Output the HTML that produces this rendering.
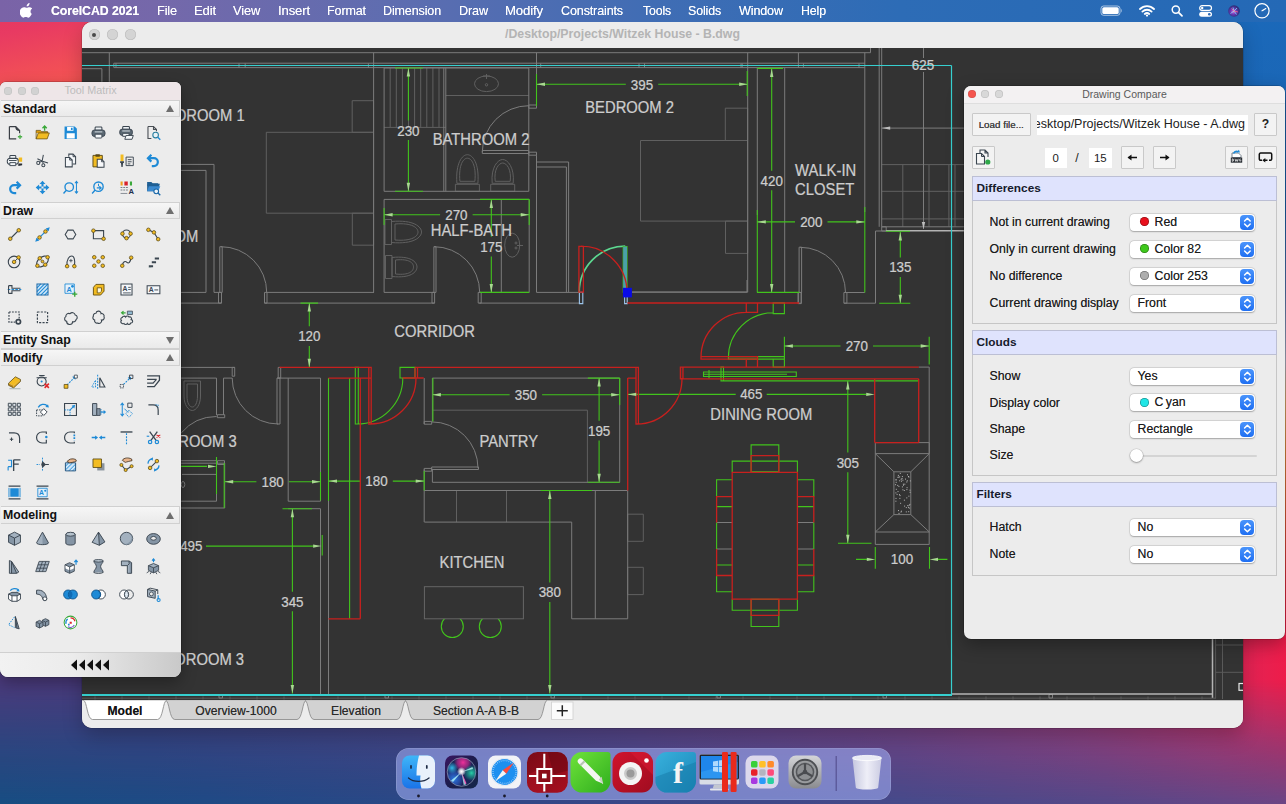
<!DOCTYPE html><html><head><meta charset="utf-8"><title>CorelCAD 2021</title><style>
*{box-sizing:border-box;margin:0;padding:0}
html,body{width:1286px;height:804px;overflow:hidden}
body{position:relative;font-family:'Liberation Sans',sans-serif;color:#222;
 background:linear-gradient(to bottom,#1b69ba 0,#1a64b2 26%,#5a7cb8 36%,#b9bcd0 45%,#e8b070 50%,#ea9040 56%,#ea6038 64%,#ee3040 72%,#f21846 80%,#ea1e4e 87%,#d82a5a 91%,#d82a5a 100%)}
#wptl{left:0;top:0;width:200px;height:100px;background:linear-gradient(168deg,#e4375f 0,#e83a62 24%,#f04c58 52%,#f85a4e 82%,#f95c4d 100%)}
#wpbA{left:0;top:640px;width:1286px;height:164px;background:linear-gradient(to right,#4b3a7b 0,#493a7b 12%,#553d7e 32%,#6a3f80 50%,#8a3a7a 70%,#b03570 84%,#d62a5c 94%,#ee1c4a 100%)}
#wpbB{left:0;top:640px;width:1286px;height:164px;background:linear-gradient(to right,#174d82 0,#1f4a85 16%,#2a4886 32%,#3a4888 50%,#454a8a 70%,#554888 86%,#6a4585 100%);
 -webkit-mask-image:linear-gradient(to bottom,transparent 0,transparent 24%,rgba(0,0,0,.55) 62%,#000 100%);mask-image:linear-gradient(to bottom,transparent 0,transparent 24%,rgba(0,0,0,.55) 62%,#000 100%)}
.abs{position:absolute}
#menubar{left:0;top:0;width:1286px;height:22px;background:linear-gradient(to right,#7a63a7 0,#7568aa 12%,#5f6db0 30%,#416db4 50%,#2d6cb6 70%,#2469b6 100%);color:#fff;font-size:13.6px;white-space:nowrap}
#menubar span{position:absolute;top:3px;transform-origin:0 50%;letter-spacing:-.15px;text-shadow:0 0 .6px rgba(255,255,255,.75)}
#main{left:82px;top:22px;width:1161px;height:706px;border-radius:10px;background:#ececec;box-shadow:0 0 0 .5px rgba(0,0,0,.25),0 8px 20px rgba(0,0,0,.22);overflow:hidden}
#mtitle{left:0;top:0;width:1161px;height:26px;background:#ececec;font-weight:bold;font-size:12.3px;color:#b4b4b4;line-height:25px}
#mtitle span{position:absolute;left:423px;top:0;white-space:nowrap;transform-origin:0 50%}
.tl{position:absolute;border-radius:50%}
#canvas{left:0;top:26px;width:1161px;height:652px;background:#333;overflow:hidden}
#tabs{left:0;top:678px;width:1161px;height:28px;background:#ececec}
#tabs span{position:absolute;top:3px;font-size:12.1px;color:#2a2a2a;text-align:center;line-height:17.5px;text-shadow:0 0 .4px rgba(0,0,0,.5)}
#tm{left:0;top:82px;width:181px;height:595px;border-radius:6px 6px 8px 8px;background:#ececec;box-shadow:0 0 0 .5px rgba(0,0,0,.3),0 6px 16px rgba(0,0,0,.3);overflow:hidden}
.tmh{position:absolute;left:1px;width:179px;height:17.200px;margin-top:-1.200px;background:linear-gradient(#f6f6f6,#eaeaea);border:1px solid #d0d0d0;border-left:0;font-weight:bold;font-size:12.3px;line-height:16px;padding-left:2px;color:#111}
.tmh i{position:absolute;right:5.500px;top:4.200px;width:0;height:0;border-left:4.200px solid transparent;border-right:4.200px solid transparent;border-bottom:7.200px solid #6e6e6e}
.tmh i.dn{border-bottom:0;border-top:7.200px solid #6e6e6e}
#dc{left:964px;top:86px;width:320.5px;height:553px;border-radius:7px;background:#ececec;box-shadow:0 0 0 .5px rgba(0,0,0,.3),0 6px 18px rgba(0,0,0,.3);overflow:hidden;font-size:12.3px;color:#1c1c1c}
.btn{position:absolute;background:#f3f3f3;border:1px solid #c9c9c9;border-radius:1px}
.fld{position:absolute;background:#fff;height:20px;line-height:20.5px;text-align:center;font-size:11.4px}
.sech{position:absolute;left:8px;width:305px;height:25px;margin-top:-1px;background:#dfe3fd;border:1px solid #bcbfd4;font-weight:bold;font-size:11.8px;line-height:23px;padding-left:3.5px;color:#161a2c}
.secb{position:absolute;left:8px;width:305px;border:1px solid #c6c6c6;border-top:0}
.lab{position:absolute;left:25.5px;height:16px;line-height:16px;white-space:nowrap;text-shadow:0 0 .4px rgba(0,0,0,.55)}
.sel{position:absolute;left:165.5px;width:125px;height:17px;background:#fff;border-radius:4px;box-shadow:0 0 0 .5px rgba(0,0,0,.12),0 .5px 1.5px rgba(0,0,0,.25);line-height:17px;padding-left:8px;font-size:12.3px;white-space:nowrap;text-shadow:0 0 .4px rgba(0,0,0,.5)}
.sel b{position:absolute;right:.5px;top:1px;width:14.5px;height:15px;border-radius:4px;background:linear-gradient(#4a94fb,#1f6ff2)}
.sel b svg{position:absolute;left:0;top:0}
.dot{display:inline-block;width:9px;height:9px;border-radius:50%;margin:0 6px 0 2px;vertical-align:-0.5px;box-shadow:inset 0 0 0 .8px rgba(0,0,0,.35)}
#dock{left:395.5px;top:748px;width:495px;height:52px;border-radius:13px;background:rgba(158,172,242,.6);box-shadow:inset 0 0 0 .6px rgba(255,255,255,.22)}
</style></head><body><div id="wptl" class="abs"></div><div id="wpbA" class="abs"></div><div id="wpbB" class="abs"></div><div id="main" class="abs"><div id="mtitle" class="abs"><span>/Desktop/Projects/Witzek House - B.dwg</span></div><div class="tl" style="left:6.9px;top:7px;width:11px;height:11px;background:#d4d4d4;box-shadow:inset 0 0 0 .6px #bdbdbd"></div><div class="tl" style="left:24.8px;top:7px;width:11px;height:11px;background:#d4d4d4;box-shadow:inset 0 0 0 .6px #bdbdbd"></div><div class="tl" style="left:42.8px;top:7px;width:11px;height:11px;background:#d4d4d4;box-shadow:inset 0 0 0 .6px #bdbdbd"></div><div class="tl" style="left:10.4px;top:10.5px;width:4px;height:4px;background:#4a4a4a"></div><div id="canvas" class="abs"><svg class="abs" style="left:0;top:0" width="1161" height="652" viewBox="82 48 1161 652"><path d="M82 698.2H1216M1215.6 600V698.2M95 696.5V699.5M122 696.5V699.5M149 696.5V699.5M176 696.5V699.5M203 696.5V699.5M230 696.5V699.5M257 696.5V699.5M284 696.5V699.5M311 696.5V699.5M338 696.5V699.5M365 696.5V699.5M392 696.5V699.5M419 696.5V699.5M446 696.5V699.5M473 696.5V699.5M500 696.5V699.5M527 696.5V699.5M554 696.5V699.5M581 696.5V699.5M608 696.5V699.5M635 696.5V699.5M662 696.5V699.5M689 696.5V699.5M716 696.5V699.5M743 696.5V699.5M770 696.5V699.5M797 696.5V699.5M824 696.5V699.5M851 696.5V699.5M878 696.5V699.5M905 696.5V699.5M932 696.5V699.5M959 696.5V699.5M986 696.5V699.5M1013 696.5V699.5M1040 696.5V699.5M1067 696.5V699.5M1094 696.5V699.5M1121 696.5V699.5M1148 696.5V699.5M1175 696.5V699.5M1202 696.5V699.5M1222.5 600V699M1216 645H1243M1216 672.3H1243" fill="none" stroke="#5a5a5a" stroke-width="1"/><path d="M881.7 164.6H964M881.7 191.3H964M881.7 218.9H964M902.8 164.6V226.8M929 164.6V226.8M948.9 164.6V226.8M955 164.6V226.8" fill="none" stroke="#626262" stroke-width="1"/><path d="M266.3 132.3H373.6V213.2H266.3ZM352.2 100.7H373.6V132.3H352.2ZM352.3 213.2H373.6V245.2H352.3ZM390.2 68V127.4M396.3 68V127.4M402.4 68V127.4M408.5 68V127.4M414.6 68V127.4M420.7 68V127.4M426.8 68V127.4M432.9 68V127.4M439 68V127.4M384.1 127.4H445.8M445.8 95.5H528.8M474.5 83.8a12 7.8 0 1 0 24 0a12 7.8 0 1 0 -24 0ZM485.3 84.8a1.2 1.2 0 1 0 2.4 0a1.2 1.2 0 1 0 -2.4 0ZM486.5 74V79M483 76H490M456.9 183.3C455.4 162.7 462.4 154.7 467.4 154.7C472.4 154.7 479.4 162.7 477.9 183.3ZM459.9 181.3C458.4 164.7 463.4 158.2 467.4 158.2C471.4 158.2 476.4 164.7 474.9 181.3ZM455.4 184.3H479.4V191.3H455.4ZM492.2 183.3C490.7 167.5 497.7 159.5 502.7 159.5C507.7 159.5 514.7 167.5 513.2 183.3ZM495.2 181.3C493.7 169.5 498.7 163 502.7 163C506.7 163 511.7 169.5 510.2 181.3ZM490.7 184.3H514.7V191.3H490.7ZM385 219.5H391.5V244.5H385ZM391.5 221.5C414 219.5 421.5 227 421.5 232C421.5 237 414 244.5 391.5 242.5ZM395 224C412.5 222.5 418 228 418 232C418 236 412.5 241.5 395 240ZM385.5 255.5H392V278.5H385.5ZM392 257.5C410.8 255.5 417 262 417 267C417 272 410.8 278.5 392 276.5ZM395.5 260C409.5 258.5 413.5 263 413.5 267C413.5 271 409.5 275.5 395.5 274ZM504.7 245.2a7.5 12 0 1 0 15 0a7.5 12 0 1 0 -15 0ZM515 243a1 1 0 1 0 2 0a1 1 0 1 0 -2 0ZM515 248a1 1 0 1 0 2 0a1 1 0 1 0 -2 0ZM517 245.5H523M640.5 140.5H747.7V221.1H640.5ZM725.3 108.2H747.7V140.5H725.3ZM725.5 221.1H747.7V253.4H725.5ZM184 381H200.5V396C200.5 405 196 410.5 192.3 410.5C188.5 410.5 184 405 184 396ZM187 384H197.5V396C197.5 403 195 407 192.3 407C189.5 407 187 403 187 396ZM432.4 410.2H587.4M587.4 410.2V482.3M456.5 490.5V522.1M506.5 490.5V522.1M627.7 514.2H643.3V541.3H627.7ZM627.7 567.3H643.3V594.6H627.7Z" fill="none" stroke="#606060" stroke-width="1"/><path d="M82 52.7H870.5M870.5 48V52.7M113.8 63.2H864.8M113.8 67.6H864.8M82 68.7H101.9M101.9 68.7V95M109.3 52.7V95M113.8 63.2V67.6M116 63.2V67.6M239 63.4V68M245.2 63.4V68M368.4 63.4V68M540.7 63.4V68M639 63.4V68M644.5 63.4V68M742.2 63.4V68M741 63.4V68M803.4 63.4V68M859 63.4V68M798.4 52.7V68M219 694.5H222.5V698H219ZM385 694.5H388.5V698H385ZM551 694.5H554.5V698H551ZM717 694.5H720.5V698H717ZM883 694.5H886.5V698H883ZM1049 694.5H1052.5V698H1049ZM373.6 52.7V292.4M82 164.4H214M214 164.4V292.4M82 170.4H206M206 170.4V292.4M219.8 246.7H222.2V292.4H219.8ZM221 246.7A45.7 45.7 0 0 1 266.7 292.4M82 292.4H206M214 292.4H219.8M266.5 292.4H374M82 303.1H221.5M218.5 292.4H221.5V303.1H218.5ZM264.5 292.4H267V303.1H264.5ZM264.5 303.1H434.6M384.1 68H528.8V191.3H384.1ZM443.8 68V191.3M445.8 68V191.3M528.8 105H536.5V108.2H528.8ZM528.8 152.2H536.5V155.2H528.8ZM528.8 105.7A46.5 46.5 0 0 0 482.3 152.2M482.3 150.5H528.8V153.5H482.3ZM536.5 52.7V105M536.5 155.2V292.4M536.5 162H568.6M536.5 167H566.4M566.4 167V292.4M568.6 162V292.4M384.1 199.4V292.4M384.1 199.4H529.2M529.2 199.4V292.4M384.1 292.4H433.9M479.4 292.4H529.2M433.9 246.7H436V292.4H433.9ZM434 246.7A45.7 45.7 0 0 1 479.7 292.4M432 292.4H434.6V303.1H432ZM478.2 292.4H481.2V303.1H478.2ZM479.4 303.1H580.1M501.3 199.4V292.4M536.6 292.4H580.1M747.7 52.7V292.2M632 292.2H747.7M757.3 68V215M784.7 68V292.4M864.8 52.7V212M879.2 48V226.8M881.7 48V226.8M799.1 247.2H801.6V292.5H799.1ZM800.3 247.3A45.2 45.2 0 0 1 845.5 292.5M798.6 292.5H801.2V303.2H798.6ZM843.9 292.5H846.9V303.2H843.9ZM845.6 292.5H864.8M843.9 303.2H875.5M875.5 231V303.2M875.5 231H886M881.7 226.8H964M881.7 226.8H886.2V231H881.7ZM881.7 128.1H964M923.5 48V58M923.5 72V229M82 367.4H234.7M232.2 367.4H234.7V376.2H232.2ZM82 378.1H216.5M223.5 378.1H232.2M216.5 378.1V415M223.5 378.1V415M217.3 414.7H224.7V417.7H217.3ZM277 378.1H280V424H277ZM278.2 424A46 46 0 0 1 232.2 378M278.2 367.4H280.7V378.1H278.2ZM277 378.1H320.5M288.2 378.1V501.2M320.5 378.1V501.2M288.2 501.2H320.5M288.2 508.7H320.5M320.5 508.7V694M328.5 500V694M216.5 416.5A46 46 0 0 0 181.3 432.9M82 460.7H216.5V501.2H82ZM82 463.2H224.7V508H82ZM217.5 460.7H224.5V464.5H217.5ZM182 474.4H216.5M181.2 484.5a1.8 3 0 1 0 3.6 0a1.8 3 0 1 0 -3.6 0ZM424.2 378.1V424M424.2 421.4H431.7V424.2H424.2ZM432.4 378.1V421.4M432.4 378.1H619.7M619.7 378.1V482.3M432.4 482.3H619.7M432.4 469.4V482.3M431.7 421.9A46.3 46.3 0 0 1 478 468.2M431.7 467H478.5V469.5H431.7ZM424.2 468.4H431.7V471.2H424.2ZM424.2 469.4V522.1M424.2 490.5H627.7M424.4 522.1H571.7M571.7 522.1V618.8M595.3 490.5V618.8M627.7 490.5V618.8M571.7 618.8H627.7M632 292H747M747 280V292M798 292.4H801.3V303.6H798ZM918.7 367.1H929.2M929.2 367.1V544.4M875.3 442.6H929.3V453.6H875.3ZM875.3 453.6V544.4M875.3 532H929.3M875.3 544.4H929.3M875.3 453.6L893.9 471.8M929.3 453.6L910.8 471.8M893.9 471.8H910.8V514.6H893.9ZM893.9 514.6L875.3 532M910.8 514.6L929.3 532M716.6 522.5H732.2M716.6 549H732.2M813.8 522.5H797.4M813.8 549H797.4" fill="none" stroke="#7c7c7c" stroke-width="1"/><path d="M951 694H1213M1212.5 600V697.8M886 230.8H964" fill="none" stroke="#b4b4b4" stroke-width="1.5"/><path d="M579.4 292.2H582.8V303.6H579.4ZM624.6 296H627.2V303.6H624.6Z" fill="none" stroke="#9cc4ea" stroke-width="1.1"/><path d="M625.2 246.2A46 46 0 0 0 579.2 292.2" fill="none" stroke="#5cd890" stroke-width="1.7"/><path d="M395 68H423M395 191.3H423M408.4 68V120.5M408.4 140.1V191.3M384.1 208V225M529.2 199.4V225M384.1 214.8H440.1M472.6 214.8H529.2M480 199.4H529.2M480 292.4H529.2M491.3 199.4V236.8M491.3 256.4V292.4M536.5 74V106M747.2 71V96M536.5 84.3H625.8M658.2 84.3H747.7M623.2 246.6H627V292.2H623.2ZM757.3 210V292.4M864.8 207V292.4M757.3 68.4H783M771.7 68.4V170.7M771.7 190.3V292.4M757.3 221.9H795M827.5 221.9H864.8M757.3 292.4H799M886 231.2H910M879.2 303.2H910.3M900.3 232V257.4M900.3 277V303.2M328.5 378.1V501M349.6 378.1V618.8M355.3 367.4H358.3V424H355.3ZM356.8 424A46 46 0 0 0 402.8 378M400 367.4H415V378H400ZM82 466.4H207M216.5 457V494M224.2 463V508M320.5 472V500.5M224.7 481.8H256.4M288.9 481.8H320.5M424.2 471V490.5M328.5 481.1H360.2M392.8 481.1H424.2M206 546.1H313M322.2 535V555.5M282.5 508.7H312M292.4 508.7V591.7M292.4 611.3V693.5M309.3 303.1V326.3M309.3 345.9V367.2M300.5 303.1H318M432.9 378.1V421.4M432.4 394.8H509.6M542.1 394.8H619.7M587.8 378.1H619.7M619.7 378.1V405M587.8 482.3H619.7M599.1 378.1V420.8M599.1 440.4V482.3M441.3 626.5a11 11 0 1 0 22 0a11 11 0 1 0 -22 0ZM479.3 626.5a11 11 0 1 0 22 0a11 11 0 1 0 -22 0ZM540.5 490.5H592M549.8 490.5V582.4M549.8 602V693.5M757 292.4H799.3M773.2 302.9H784.4V313.6H773.2ZM773.2 312.8A44.8 44.8 0 0 0 728.4 357.6M728.4 356.6H784.4V359.1H728.4ZM773.2 359.1H784.4V367.1H773.2ZM784.4 336.7V367M929.2 336.7V364.5M784.4 346H840.5M873 346H929.2M721 380.9H918.7M703.5 372H796.3V376.5H703.5ZM703.5 374.2H787M721 367.1H723.5V380.9H721ZM709 370V378.5M627.7 394.4H735.7M766.7 394.4H866M847.8 380.9V452.6M847.8 472.2V543.2M838 543.2H871.5M875.3 547V568.8M929.5 547V568.8M856 559.4H867M938 559.4H947.4M751.1 444.9H778.8V471.8H751.1ZM732.2 472.3L732.2 461.1L797.4 461.1L797.4 472.3M732.2 599.2L732.2 610.3L797.4 610.3L797.4 599.2M751.1 599.2H778.8V626.5H751.1ZM732.2 479.8L716.6 479.8L716.6 496.7M716.6 506.6H732.2M732.2 565L716.6 565M716.6 575.5L716.6 591.7L732.2 591.7M716.6 522.5V549M797.4 479.8L813.8 479.8L813.8 496.7M813.8 506.6H797.4M797.4 565L813.8 565M813.8 575.5L813.8 591.7L797.4 591.7M813.8 522.5V549" fill="none" stroke="#42c41c" stroke-width="1.1"/><rect x="424.4" y="586.7" width="99" height="32.1" fill="#333" stroke="#666"/><rect x="623.2" y="246.6" width="3.800" height="45.600" fill="#4aa0a8"/><path d="M578.9 246.3H583.4V292.2H578.9ZM581 246.2A46 46 0 0 1 627 292.2M627.4 303H799.1M279.5 367.4H370.2M360.3 378.1V618.8M328.5 618.8H360.3M328.5 378.1H371.5M368.8 367.4H371.2V424H368.8ZM370 424A46 46 0 0 0 416 378M415 367.4V378M417.5 367.4V378M415 367.4H638.4M402.6 378H423.7M627.7 378.1V490.5M627.7 378.1H636M636 367.4H638.4V424H636ZM636.5 424A45.5 45.5 0 0 0 682 378.5M680.6 367.2H683V378.6H680.6ZM660 302.9H798M746.3 302.9H757.5V312.3H746.3ZM746.3 312.3A45.3 45.3 0 0 0 701 357.6M701 356.6H757.5V359.1H701ZM746.3 359.1H757.5V367.1H746.3ZM680.4 367.1H918.7M680.4 367.1H682.9V378.8H680.4ZM682.9 378.8H918.7M918.7 378.8V442.6M874.7 378.8V442.6M874.7 442.6H918.7M751.1 472.3L751.1 455.6L778.8 455.6L778.8 472.3M751.1 599.2L751.1 615.4L778.8 615.4L778.8 599.2M732.2 472.3H797.4V599.2H732.2ZM732.2 496.7L716.6 496.7L716.6 522.5M716.6 549L716.6 575.5L732.2 575.5M797.4 496.7L813.8 496.7L813.8 522.5M813.8 549L813.8 575.5L797.4 575.5" fill="none" stroke="#c8201e" stroke-width="1.3"/><path d="M82 65.5H951.5M951.5 65.5V695" fill="none" stroke="#36cfcf" stroke-width="1.2"/><path d="M82 695H952" fill="none" stroke="#36cfcf" stroke-width="2"/><rect x="1239" y="683.5" width="5" height="6.800" fill="none" stroke="#e8e8e8" stroke-width="1.200"/><rect x="622.9" y="287.8" width="9" height="9.6" fill="#0a0ae6"/><path d="M898.3 477.2h1M900.7 479.3h1M895.8 489.3h1M908.6 505.4h1M906.3 482h1M902.9 484.2h1M897.4 477.3h1M898 510.6h1M907.2 505.7h1M906.8 480.8h1M899.4 498.4h1M905.8 507.6h1M908 476.5h1M903.9 500.2h1M902.4 480.2h1M901.9 476.6h1M908.8 508.1h1M903 485.2h1M908.4 496.2h1M908 507.3h1M902.4 489.8h1M903.8 490.5h1M897.2 485.4h1M907 474.8h1M895.5 498.4h1M899 494.7h1M901.9 486.9h1M909.8 480.9h1M901 481.2h1M904.3 484.2h1M900.1 503.3h1M899.6 495.6h1M908.4 477.1h1M895.7 482.3h1M906.3 497.9h1M898.4 486.4h1M897.5 491.6h1M895.4 501.2h1M908.2 511.7h1M905.8 511.9h1M895.1 484.7h1M909.3 504.4h1M901 511.2h1M904.1 506.1h1M899.2 480.8h1M901.5 478.5h1M900.5 512h1M899.8 473.4h1M895.5 479.9h1M906.6 487.7h1M899.2 476.9h1M909.5 490.2h1M897.9 475.4h1M895.6 479.8h1M905 479.1h1M895.4 492.9h1M898.5 513.4h1M896.6 494.4h1M906.4 489.6h1M909.6 492.3h1" stroke="#b5b5b5" stroke-width="1" fill="none"/><path d="M408.4 68L406.7 76.5L410.1 76.5Z" fill="#a8d890"/><path d="M408.4 191.3L406.7 182.8L410.1 182.8Z" fill="#a8d890"/><path d="M384.1 214.8L392.6 213.1L392.6 216.5Z" fill="#a8d890"/><path d="M529.2 214.8L520.7 213.1L520.7 216.5Z" fill="#a8d890"/><path d="M491.3 199.4L489.6 207.9L493 207.9Z" fill="#a8d890"/><path d="M491.3 292.4L489.6 283.9L493 283.9Z" fill="#a8d890"/><path d="M536.5 84.3L545 82.6L545 86Z" fill="#a8d890"/><path d="M747.7 84.3L739.2 82.6L739.2 86Z" fill="#a8d890"/><path d="M771.7 68.4L770 76.9L773.4 76.9Z" fill="#a8d890"/><path d="M771.7 292.4L770 283.9L773.4 283.9Z" fill="#a8d890"/><path d="M757.3 221.9L765.8 220.2L765.8 223.6Z" fill="#a8d890"/><path d="M864.8 221.9L856.3 220.2L856.3 223.6Z" fill="#a8d890"/><path d="M881.7 128.1L890.2 126.4L890.2 129.8Z" fill="#bdbdbd"/><path d="M923.5 229L921.8 222L925.2 222Z" fill="#bdbdbd"/><path d="M900.3 232L898.6 240.5L902 240.5Z" fill="#a8d890"/><path d="M900.3 303.2L898.6 294.7L902 294.7Z" fill="#a8d890"/><path d="M216.5 466.4L208 464.7L208 468.1Z" fill="#a8d890"/><path d="M224.7 481.8L233.2 480.1L233.2 483.5Z" fill="#a8d890"/><path d="M320.5 481.8L312 480.1L312 483.5Z" fill="#a8d890"/><path d="M328.5 481.1L337 479.4L337 482.8Z" fill="#a8d890"/><path d="M424.2 481.1L415.7 479.4L415.7 482.8Z" fill="#a8d890"/><path d="M321.6 546.1L313.1 544.4L313.1 547.8Z" fill="#a8d890"/><path d="M292.4 508.7L290.7 517.2L294.1 517.2Z" fill="#a8d890"/><path d="M292.4 693.5L290.7 685L294.1 685Z" fill="#a8d890"/><path d="M309.3 303.1L307.6 311.6L311 311.6Z" fill="#a8d890"/><path d="M309.3 367.2L307.6 358.7L311 358.7Z" fill="#a8d890"/><path d="M432.4 394.8L440.9 393.1L440.9 396.5Z" fill="#a8d890"/><path d="M619.7 394.8L611.2 393.1L611.2 396.5Z" fill="#a8d890"/><path d="M599.1 378.1L597.4 386.6L600.8 386.6Z" fill="#a8d890"/><path d="M599.1 482.3L597.4 473.8L600.8 473.8Z" fill="#a8d890"/><path d="M549.8 490.5L548.1 499L551.5 499Z" fill="#a8d890"/><path d="M549.8 693.5L548.1 685L551.5 685Z" fill="#a8d890"/><path d="M784.4 346L792.9 344.3L792.9 347.7Z" fill="#a8d890"/><path d="M929.2 346L920.7 344.3L920.7 347.7Z" fill="#a8d890"/><path d="M627.7 394.4L636.2 392.7L636.2 396.1Z" fill="#a8d890"/><path d="M874.7 394.4L866.2 392.7L866.2 396.1Z" fill="#a8d890"/><path d="M847.8 380.9L846.1 389.4L849.5 389.4Z" fill="#a8d890"/><path d="M847.8 543.2L846.1 534.7L849.5 534.7Z" fill="#a8d890"/><path d="M875.3 559.4L866.8 557.7L866.8 561.1Z" fill="#a8d890"/><path d="M929.5 559.4L938 557.7L938 561.1Z" fill="#a8d890"/><g font-family="'Liberation Sans',sans-serif" fill="#cdcdcd" stroke="#cdcdcd" stroke-width=".25"><text transform="translate(244.7 121.4) scale(.925 1)" font-size="16.0" text-anchor="end">BEDROOM 1</text><text transform="translate(198.3 241.6) scale(.925 1)" font-size="16.0" text-anchor="end">BATHROOM</text><text transform="translate(481 144.6) scale(.925 1)" font-size="16.0" text-anchor="middle">BATHROOM 2</text><text transform="translate(408.4 135.5) scale(.925 1)" font-size="14.49" text-anchor="middle">230</text><text transform="translate(456.4 220) scale(.925 1)" font-size="14.49" text-anchor="middle">270</text><text transform="translate(491.3 251.8) scale(.925 1)" font-size="14.49" text-anchor="middle">175</text><text transform="translate(471.3 236) scale(.925 1)" font-size="16.0" text-anchor="middle">HALF-BATH</text><text transform="translate(434.6 337.2) scale(.925 1)" font-size="16.0" text-anchor="middle">CORRIDOR</text><text transform="translate(629.6 112.8) scale(.925 1)" font-size="16.0" text-anchor="middle">BEDROOM 2</text><text transform="translate(642 89.5) scale(.925 1)" font-size="14.49" text-anchor="middle">395</text><text transform="translate(771.7 185.7) scale(.925 1)" font-size="14.49" text-anchor="middle">420</text><text transform="translate(795.1 176.3) scale(.925 1)" font-size="16.0" text-anchor="start">WALK-IN</text><text transform="translate(795.1 195.4) scale(.925 1)" font-size="16.0" text-anchor="start">CLOSET</text><text transform="translate(811.3 227.1) scale(.925 1)" font-size="14.49" text-anchor="middle">200</text><text transform="translate(923 70) scale(.925 1)" font-size="14.49" text-anchor="middle">625</text><text transform="translate(900.3 272.4) scale(.925 1)" font-size="14.49" text-anchor="middle">135</text><text transform="translate(236.7 447) scale(.925 1)" font-size="16.0" text-anchor="end">BATHROOM 3</text><text transform="translate(272.6 487) scale(.925 1)" font-size="14.49" text-anchor="middle">180</text><text transform="translate(376.5 486.3) scale(.925 1)" font-size="14.49" text-anchor="middle">180</text><text transform="translate(191.3 551.2) scale(.925 1)" font-size="14.49" text-anchor="middle">495</text><text transform="translate(292.4 606.7) scale(.925 1)" font-size="14.49" text-anchor="middle">345</text><text transform="translate(244.1 664.6) scale(.925 1)" font-size="16.0" text-anchor="end">BEDROOM 3</text><text transform="translate(309.3 341.3) scale(.925 1)" font-size="14.49" text-anchor="middle">120</text><text transform="translate(525.9 400) scale(.925 1)" font-size="14.49" text-anchor="middle">350</text><text transform="translate(599.1 435.8) scale(.925 1)" font-size="14.49" text-anchor="middle">195</text><text transform="translate(508.7 447) scale(.925 1)" font-size="16.0" text-anchor="middle">PANTRY</text><text transform="translate(472 568.4) scale(.925 1)" font-size="16.0" text-anchor="middle">KITCHEN</text><text transform="translate(549.8 597.4) scale(.925 1)" font-size="14.49" text-anchor="middle">380</text><text transform="translate(856.8 351.2) scale(.925 1)" font-size="14.49" text-anchor="middle">270</text><text transform="translate(751.3 399.2) scale(.925 1)" font-size="14.49" text-anchor="middle">465</text><text transform="translate(761.3 420) scale(.925 1)" font-size="16.0" text-anchor="middle">DINING ROOM</text><text transform="translate(847.8 467.6) scale(.925 1)" font-size="14.49" text-anchor="middle">305</text><text transform="translate(902 564.4) scale(.925 1)" font-size="14.49" text-anchor="middle">100</text></g></svg></div><div id="tabs" class="abs"><svg class="abs" style="left:0;top:0" width="1161" height="28" viewBox="82 700 1161 28"><rect x="82" y="700" width="1161" height="1" fill="#bdbdbd"/><path d="M405 700.5C408.5 700.5 408.5 719.500 414 719.500H538C543.5 719.500 543.5 700.5 547 700.5" fill="#d2d2d2" stroke="#8e8e8e" stroke-width=".9"/><path d="M305 700.5C308.5 700.5 308.5 719.500 314 719.500H397C402.5 719.500 402.5 700.5 406 700.5" fill="#d2d2d2" stroke="#8e8e8e" stroke-width=".9"/><path d="M165.8 700.5C169.3 700.5 169.3 719.500 174.8 719.500H297C302.5 719.500 302.5 700.5 306 700.5" fill="#d2d2d2" stroke="#8e8e8e" stroke-width=".9"/><path d="M83.5 700.5C87.0 700.5 87.0 719.500 92.5 719.500H157.5C163.0 719.500 163.0 700.5 166.5 700.5" fill="#ffffff" stroke="#8e8e8e" stroke-width=".9"/><rect x="551.5" y="702" width="21.5" height="17.500" fill="#fbfbfb" stroke="#cfcfcf" stroke-width=".8"/><path d="M562.3 705.3v11M556.800 710.800h11" stroke="#222" stroke-width="1.5" fill="none"/></svg><span style="left:13px;width:60px;font-weight:bold;color:#111">Model</span><span style="left:104px;width:100px">Overview-1000</span><span style="left:234px;width:80px">Elevation</span><span style="left:334px;width:120px">Section A-A B-B</span></div></div><div id="tm" class="abs"><div class="abs" style="left:0;top:0;width:181px;height:18px;background:#eee6e8;text-align:center;font-size:10.800px;color:#bcbcbc;line-height:17.5px;padding-left:0">Tool Matrix</div><div class="tl" style="left:4.4px;top:5.2px;width:8px;height:8px;background:#d2d2d2;box-shadow:inset 0 0 0 .5px #c0c0c0"></div><div class="tl" style="left:17.8px;top:5.2px;width:8px;height:8px;background:#d2d2d2;box-shadow:inset 0 0 0 .5px #c0c0c0"></div><div class="tl" style="left:31.1px;top:5.2px;width:8px;height:8px;background:#d2d2d2;box-shadow:inset 0 0 0 .5px #c0c0c0"></div><div class="tmh" style="top:19px">Standard<i></i></div><div class="tmh" style="top:121px">Draw<i></i></div><div class="tmh" style="top:250.60000000000002px">Entity Snap<i class="dn"></i></div><div class="tmh" style="top:268.2px">Modify<i></i></div><div class="tmh" style="top:425.5px">Modeling<i></i></div><svg class="abs" style="left:6.4px;top:41.8px" width="17" height="17" viewBox="0 0 20 20"><path d="M4 3h7.500l4.500 4.500v3.500M4 3v14.500h8M11.500 3c0 2.500 1 4.500 4.500 4.500" fill="none" stroke="#3a3f45" stroke-width="1.4" /><path d="M16.500 12.500v5M14 15h5" fill="none" stroke="#4db04a" stroke-width="1.5" /></svg><svg class="abs" style="left:34.4px;top:41.8px" width="17" height="17" viewBox="0 0 20 20"><path d="M2.500 7.500h5l1.500 1.500h7v1.500h-13.500z" fill="#d89a10"/><path d="M2.500 17.500l2.500-7h13l-2.500 7z" fill="#f2bc22"/><path d="M2.500 17.500v-10h5l1.500 1.500h7v1.500M2.500 17.500l2.500-7h13l-2.500 7z" fill="none" stroke="#6a5210" stroke-width="0.9" /><path d="M12.500 8v-5M10 5l2.500-2.700L15 5" fill="none" stroke="#38a838" stroke-width="1.6" /></svg><svg class="abs" style="left:62.4px;top:41.8px" width="17" height="17" viewBox="0 0 20 20"><path d="M3 3h12l2.500 2.500v12h-14.500z" fill="#1e8ad6"/><path d="M6 3.500h7.500v4.500h-7.500zM5.500 11h9.500v6h-9.500z" fill="#fff"/><path d="M10.500 4.500h2v2.500h-2z" fill="#1e8ad6"/></svg><svg class="abs" style="left:89.8px;top:41.8px" width="17" height="17" viewBox="0 0 20 20"><path d="M6 7.500v-3a1 1 0 0 1 1-1h6a1 1 0 0 1 1 1v3" fill="#eef2f5" stroke="#3b4650" stroke-width="1.2" /><rect x="2.300" y="7" width="15.400" height="7.800" rx="3.200" fill="#5b6873" stroke="#3b4650" stroke-width="1.100"/><path d="M5.500 9.300h9" fill="none" stroke="#dfe6ec" stroke-width="1.1" /><path d="M6 12h8v3.500a1 1 0 0 1-1 1h-6a1 1 0 0 1-1-1z" fill="#f4f7f9" stroke="#3b4650" stroke-width="1.1" /></svg><svg class="abs" style="left:117.5px;top:41.8px" width="17" height="17" viewBox="0 0 20 20"><path d="M5.500 6.500v-2.500a1 1 0 0 1 1-1h6a1 1 0 0 1 1 1v2.500" fill="#eef2f5" stroke="#3b4650" stroke-width="1.2" /><rect x="2" y="6" width="15" height="7.500" rx="3.200" fill="#5b6873" stroke="#3b4650" stroke-width="1.100"/><path d="M5 8.200h9" fill="none" stroke="#dfe6ec" stroke-width="1.1" /><path d="M5.500 11h7.500v3.500h-7.500z" fill="#f4f7f9" stroke="#3b4650" stroke-width="1.1" /><path d="M9.500 13.500h8.500l-1.500 4.500h-8.500z" fill="#f4f7f9" stroke="#3b4650" stroke-width="1.1" /></svg><svg class="abs" style="left:144.8px;top:41.8px" width="17" height="17" viewBox="0 0 20 20"><path d="M3.500 3h6.500l3.500 3.500v2M3.500 3v14h4M10 3v3.500h3.500" fill="none" stroke="#4a4f55" stroke-width="1.3" /><path d="M15.800 13a3.300 3.300 0 1 1-6.600 0a3.300 3.300 0 0 1 6.600 0z" fill="#e8f2f6" stroke="#2a7f9f" stroke-width="1.3" /><path d="M15 15.500l3 3" fill="none" stroke="#1e8ad6" stroke-width="1.6" /></svg><svg class="abs" style="left:6.4px;top:69.7px" width="17" height="17" viewBox="0 0 20 20"><path d="M4.500 8v-3a1 1 0 0 1 1-1h5a1 1 0 0 1 1 1v3" fill="#eef2f5" stroke="#3b4650" stroke-width="1.2" /><rect x="1.500" y="7.500" width="13" height="7" rx="3" fill="#f4f7f9" stroke="#3b4650" stroke-width="1.200"/><path d="M3.500 10h9" fill="none" stroke="#3b4650" stroke-width="1.1" /><path d="M4.500 12.500h7v3.500h-7z" fill="#f4f7f9" stroke="#3b4650" stroke-width="1.1" /><path d="M15 6.500h4v5h-4z" fill="#f2bc22"/><path d="M14.500 13.500h4.500v2l-4.500 1z" fill="#2a2f35"/></svg><svg class="abs" style="left:34.4px;top:69.7px" width="17" height="17" viewBox="0 0 20 20"><path d="M11 3.500l-1.500 7.500M4 8l6 2.800l6.500 2.200" fill="none" stroke="#3b4650" stroke-width="1.2" /><path d="M9.500 11l-3 1" fill="none" stroke="#3b4650" stroke-width="1.2" /><circle cx="5" cy="12.800" r="1.800" fill="none" stroke="#3b4650" stroke-width="1.2"/><circle cx="11" cy="15.500" r="1.800" fill="none" stroke="#3b4650" stroke-width="1.200"/><path d="M10.200 11.300l.6 2.500" fill="none" stroke="#3b4650" stroke-width="1.2" /></svg><svg class="abs" style="left:62.4px;top:69.7px" width="17" height="17" viewBox="0 0 20 20"><path d="M8 5.500v-3h5l3 3v8.500h-3.500" fill="#f4f6f8" stroke="#3b4650" stroke-width="1.2" /><path d="M13 2.500v3h3" fill="none" stroke="#3b4650" stroke-width="1.1" /><path d="M4 6.500h5l3 3v8h-8z" fill="#f4f6f8" stroke="#3b4650" stroke-width="1.2" /><path d="M9 6.500v3h3" fill="none" stroke="#3b4650" stroke-width="1.1" /></svg><svg class="abs" style="left:89.8px;top:69.7px" width="17" height="17" viewBox="0 0 20 20"><path d="M3.500 4h11v13.500h-11z" fill="#f2bc22"/><path d="M3.500 4h11v13.500h-11z" fill="none" stroke="#5a4a18" stroke-width="1.1" /><path d="M6.500 2.500h5v3h-5z" fill="#5a4a18"/><path d="M8.500 8.500h5l3 3v6.500h-8z" fill="#f7f8fa" stroke="#3b4650" stroke-width="1.2" /><path d="M13.500 8.500v3h3" fill="none" stroke="#3b4650" stroke-width="1" /></svg><svg class="abs" style="left:117.5px;top:69.7px" width="17" height="17" viewBox="0 0 20 20"><path d="M3 3h3.500v8h-3.500z" fill="#f2bc22"/><path d="M2.500 11h4.500v2h-4.500zM3.500 13h2.500l-.5 4.500h-1.500z" fill="#3b4650"/><path d="M9.500 6h8.500v10h-8.500zM11.500 9h4.500M11.500 11.500h4.500M11.500 14h3" fill="none" stroke="#3b4650" stroke-width="1.1" /></svg><svg class="abs" style="left:144.8px;top:69.7px" width="17" height="17" viewBox="0 0 20 20"><path d="M7.500 3.300l-4 4l4 4M4 7.300h6.500a4.600 4.600 0 0 1 0 9.200h-2.500" fill="none" stroke="#1e8ad6" stroke-width="2.6" stroke-linejoin="miter"/></svg><svg class="abs" style="left:6.4px;top:97.4px" width="17" height="17" viewBox="0 0 20 20"><path d="M12.500 3.300l4 4l-4 4M16 7.300h-6.500a4.600 4.600 0 0 0 0 9.200h2.500" fill="none" stroke="#1e8ad6" stroke-width="2.6" stroke-linejoin="miter"/></svg><svg class="abs" style="left:34.4px;top:97.4px" width="17" height="17" viewBox="0 0 20 20"><path d="M10 2l3.500 4h-2.300v2.800h-2.400v-2.800h-2.300zM10 18l3.500-4h-2.300v-2.800h-2.400v2.800h-2.300zM2 10l4-3.500v2.300h2.800v2.400h-2.800v2.300zM18 10l-4-3.500v2.300h-2.800v2.400h2.800v2.300z" fill="#1e8ad6"/></svg><svg class="abs" style="left:62.4px;top:97.4px" width="17" height="17" viewBox="0 0 20 20"><path d="M13.500 9.500a5 5 0 1 1-10 0a5 5 0 0 1 10 0zM4.800 13.500l-3 3.500" fill="none" stroke="#1e8ad6" stroke-width="1.6" /><path d="M17 3v13.500M15.200 5l1.800-2.200l1.800 2.200M15.200 14.500l1.800 2.200l1.800-2.200" fill="none" stroke="#1e8ad6" stroke-width="1.2" /></svg><svg class="abs" style="left:89.8px;top:97.4px" width="17" height="17" viewBox="0 0 20 20"><path d="M15.500 9a5.500 5.500 0 1 1-11 0a5.500 5.500 0 0 1 11 0zM5.800 13.300l-3.300 3.700" fill="none" stroke="#1e8ad6" stroke-width="1.6" /><path d="M8 10.500h5M11 8.500l2.200 2l-2.200 2" fill="none" stroke="#1e8ad6" stroke-width="1.3" /><path d="M10 5.500v3" fill="none" stroke="#1e8ad6" stroke-width="1.2" /></svg><svg class="abs" style="left:117.5px;top:97.4px" width="17" height="17" viewBox="0 0 20 20"><path d="M3 3h2.500v4.500h-2.500z" fill="#f0a020"/><path d="M7.500 3h4v4.500h-4z" fill="#d8202a"/><path d="M14 3h2.500v4.500h-2.500z" fill="#3aa83a"/><path d="M3 10h9M3 13h9" fill="none" stroke="#7a8088" stroke-width="1.2" stroke-dasharray="2.200 1"/><path d="M3 17h8" fill="none" stroke="#7a8088" stroke-width="1" /><text x="12.300" y="17.800" font-size="9" font-weight="bold" fill="#1f2f4f" font-family="Liberation Sans,sans-serif">A</text></svg><svg class="abs" style="left:144.8px;top:97.4px" width="17" height="17" viewBox="0 0 20 20"><path d="M2.500 3.500h5l1.500 1.500h6.500v3h-13z" fill="#1f5f94"/><path d="M2.500 6.500h3l1.500-1h10.500l-2.500 9h-12.500z" fill="#1f5f94"/><path d="M4.500 8.500h13.500l-2.500 6h-13z" fill="#3b8ad0"/><path d="M16 14.500a2.800 2.800 0 1 1-5.600 0a2.800 2.800 0 0 1 5.600 0z" fill="#eef4f9" stroke="#1a68a8" stroke-width="1.3" /><path d="M15.300 16.600l2.700 2.400" fill="none" stroke="#1a68a8" stroke-width="1.6" /></svg><svg class="abs" style="left:6.4px;top:143.8px" width="17" height="17" viewBox="0 0 20 20"><path d="M5 15l10-10" fill="none" stroke="#3b4650" stroke-width="1.3" /><circle cx="5" cy="15" r="2.1" fill="#f2bc22" stroke="#5a4a18" stroke-width=".9"/><circle cx="15" cy="5" r="2.1" fill="#f2bc22" stroke="#5a4a18" stroke-width=".9"/></svg><svg class="abs" style="left:34.4px;top:143.8px" width="17" height="17" viewBox="0 0 20 20"><path d="M3 17l14-14" fill="none" stroke="#1e8ad6" stroke-width="1.4" /><path d="M18.500 1.500l-4.800 1.300l3.500 3.500zM1.500 18.500l4.800-1.300l-3.500-3.500z" fill="#1e8ad6"/><circle cx="6.5" cy="13.5" r="2.1" fill="#f2bc22" stroke="#5a4a18" stroke-width=".9"/><circle cx="13.5" cy="6.5" r="2.1" fill="#f2bc22" stroke="#5a4a18" stroke-width=".9"/></svg><svg class="abs" style="left:62.4px;top:143.8px" width="17" height="17" viewBox="0 0 20 20"><path d="M7 4.800h6l3.200 5.200l-3.200 5.200h-6l-3.200-5.200z" fill="none" stroke="#3b4650" stroke-width="1.3" /></svg><svg class="abs" style="left:89.8px;top:143.8px" width="17" height="17" viewBox="0 0 20 20"><path d="M4 5.500h12v9.500h-12z" fill="none" stroke="#3b4650" stroke-width="1.3" /><circle cx="4" cy="5.5" r="2.1" fill="#f2bc22" stroke="#5a4a18" stroke-width=".9"/><circle cx="16" cy="15" r="2.1" fill="#f2bc22" stroke="#5a4a18" stroke-width=".9"/></svg><svg class="abs" style="left:117.5px;top:143.8px" width="17" height="17" viewBox="0 0 20 20"><circle cx="10" cy="9.500" r="4.800" fill="none" stroke="#3b4650" stroke-width="1.300"/><circle cx="5.2" cy="9" r="2.1" fill="#f2bc22" stroke="#5a4a18" stroke-width=".9"/><circle cx="14.8" cy="9" r="2.1" fill="#f2bc22" stroke="#5a4a18" stroke-width=".9"/><circle cx="10" cy="14.3" r="2.1" fill="#f2bc22" stroke="#5a4a18" stroke-width=".9"/></svg><svg class="abs" style="left:144.8px;top:143.8px" width="17" height="17" viewBox="0 0 20 20"><path d="M4 4.500l6.500 3l5 8" fill="none" stroke="#3b4650" stroke-width="1.3" /><circle cx="4" cy="4.5" r="2.1" fill="#f2bc22" stroke="#5a4a18" stroke-width=".9"/><circle cx="10.5" cy="7.5" r="2.1" fill="#f2bc22" stroke="#5a4a18" stroke-width=".9"/><circle cx="15.5" cy="15.5" r="2.1" fill="#f2bc22" stroke="#5a4a18" stroke-width=".9"/></svg><svg class="abs" style="left:6.4px;top:171.1px" width="17" height="17" viewBox="0 0 20 20"><circle cx="9.500" cy="10.500" r="6.800" fill="none" stroke="#3b4650" stroke-width="1.300"/><path d="M9.500 10.500l5-5" fill="none" stroke="#3b4650" stroke-width="1.1" /><circle cx="9.5" cy="10.5" r="2.1" fill="#f2bc22" stroke="#5a4a18" stroke-width=".9"/><circle cx="14.8" cy="5.2" r="2.1" fill="#f2bc22" stroke="#5a4a18" stroke-width=".9"/></svg><svg class="abs" style="left:34.4px;top:171.1px" width="17" height="17" viewBox="0 0 20 20"><ellipse cx="10" cy="10" rx="8" ry="5" transform="rotate(-40 10 10)" fill="none" stroke="#3b4650" stroke-width="1.300"/><circle cx="4" cy="15" r="2.1" fill="#f2bc22" stroke="#5a4a18" stroke-width=".9"/><circle cx="16" cy="5" r="2.1" fill="#f2bc22" stroke="#5a4a18" stroke-width=".9"/><circle cx="6.8" cy="6.2" r="2.1" fill="#f2bc22" stroke="#5a4a18" stroke-width=".9"/><circle cx="13.2" cy="13.8" r="2.1" fill="#f2bc22" stroke="#5a4a18" stroke-width=".9"/><circle cx="10" cy="10" r="1.6" fill="#f2bc22" stroke="#5a4a18" stroke-width=".9"/></svg><svg class="abs" style="left:62.4px;top:171.1px" width="17" height="17" viewBox="0 0 20 20"><path d="M6 15.500c-1-9 3-12 5.500-12s4.500 5 3 12" fill="none" stroke="#3b4650" stroke-width="1.3" /><path d="M10.500 7v4M8.500 9h4" fill="none" stroke="#3b4650" stroke-width="1" /><circle cx="6" cy="15.5" r="2.1" fill="#f2bc22" stroke="#5a4a18" stroke-width=".9"/><circle cx="14.5" cy="15.5" r="2.1" fill="#f2bc22" stroke="#5a4a18" stroke-width=".9"/></svg><svg class="abs" style="left:89.8px;top:171.1px" width="17" height="17" viewBox="0 0 20 20"><circle cx="5" cy="5" r="2.1" fill="#f2bc22" stroke="#5a4a18" stroke-width=".9"/><circle cx="15" cy="5" r="2.1" fill="#f2bc22" stroke="#5a4a18" stroke-width=".9"/><circle cx="10" cy="10" r="2.1" fill="#f2bc22" stroke="#5a4a18" stroke-width=".9"/><circle cx="5" cy="15" r="2.1" fill="#f2bc22" stroke="#5a4a18" stroke-width=".9"/><circle cx="15" cy="15" r="2.1" fill="#f2bc22" stroke="#5a4a18" stroke-width=".9"/></svg><svg class="abs" style="left:117.5px;top:171.1px" width="17" height="17" viewBox="0 0 20 20"><path d="M5 15c1-5 3.500-6 5.500-4s4 0 5-5.500" fill="none" stroke="#3b4650" stroke-width="1.4" /><circle cx="5" cy="15" r="2.1" fill="#f2bc22" stroke="#5a4a18" stroke-width=".9"/><circle cx="15.5" cy="5.5" r="2.1" fill="#f2bc22" stroke="#5a4a18" stroke-width=".9"/></svg><svg class="abs" style="left:144.8px;top:171.1px" width="17" height="17" viewBox="0 0 20 20"><path d="M4.500 15.500h5M8 11h5M11.500 6.500h5" fill="none" stroke="#3b4650" stroke-width="2.3" /><path d="M4.500 17h3" fill="none" stroke="#9aa" stroke-width="1" /></svg><svg class="abs" style="left:6.4px;top:198.8px" width="17" height="17" viewBox="0 0 20 20"><path d="M3 5.500h4v3h10M3 14.500h4v-3h10" fill="none" stroke="#3b4650" stroke-width="1.3" /><path d="M2 10h16" fill="none" stroke="#1e8ad6" stroke-width="1.3" stroke-dasharray="3 1.500"/><path d="M3 5.500v9" fill="none" stroke="#3b4650" stroke-width="1.3" /></svg><svg class="abs" style="left:34.4px;top:198.8px" width="17" height="17" viewBox="0 0 20 20"><path d="M3.500 3.500h13v13h-13z" fill="#cfe6f8"/><path d="M3.500 8l4.500-4.500M3.500 12.500l9-9M3.500 16.500l13-13M8 16.500l8.500-8.500M12.500 16.500l4-4" fill="none" stroke="#1e8ad6" stroke-width="1.2" /><path d="M3.500 3.500h13v13h-13z" fill="none" stroke="#1f6aa8" stroke-width="1.2" /></svg><svg class="abs" style="left:62.4px;top:198.8px" width="17" height="17" viewBox="0 0 20 20"><path d="M3.500 3.500h11v11h-11z" fill="#e6f2fb" stroke="#1e8ad6" stroke-width="1" /><text x="5.300" y="12.500" font-size="8.500" font-weight="bold" fill="#1e8ad6" font-family="Liberation Sans,sans-serif">A</text><circle cx="12.300" cy="6.300" r="1.600" fill="#1e8ad6"/><path d="M15 12.500v6M12 15.500h6" fill="none" stroke="#38a838" stroke-width="1.6" /></svg><svg class="abs" style="left:89.8px;top:198.8px" width="17" height="17" viewBox="0 0 20 20"><path d="M7 4h9.500v8l-4 4.500h-8.500v-9z" fill="#f2bc22" stroke="#6a5210" stroke-width="1.1" /><path d="M8.500 8h5v4l-2 2h-3z" fill="#fff7d8" stroke="#6a5210" stroke-width="1" /></svg><svg class="abs" style="left:117.5px;top:198.8px" width="17" height="17" viewBox="0 0 20 20"><path d="M3.500 3.500h13v13h-13z" fill="#f4f6f8" stroke="#3b4650" stroke-width="1.2" /><text x="5.300" y="12" font-size="8" font-weight="bold" fill="#3b4650" font-family="Liberation Sans,sans-serif">A</text><path d="M12 7.500h3M12 10h3M6 14h9" fill="none" stroke="#3b4650" stroke-width="1" /></svg><svg class="abs" style="left:144.8px;top:198.8px" width="17" height="17" viewBox="0 0 20 20"><path d="M2.500 5.500h15v9.500h-15z" fill="#f4f6f8" stroke="#3b4650" stroke-width="1.2" /><text x="4.300" y="13" font-size="8" font-weight="bold" fill="#3b4650" font-family="Liberation Sans,sans-serif">A</text><path d="M11 10.500h4.500" fill="none" stroke="#3b4650" stroke-width="1.1" /></svg><svg class="abs" style="left:6.4px;top:226.5px" width="17" height="17" viewBox="0 0 20 20"><path d="M3.500 3.500h12v8M3.500 3.500v12h7" fill="none" stroke="#3b4650" stroke-width="1.4" stroke-dasharray="2.200 1.300"/><circle cx="14.500" cy="15" r="2.600" fill="none" stroke="#3b4650" stroke-width="2"/></svg><svg class="abs" style="left:34.4px;top:226.5px" width="17" height="17" viewBox="0 0 20 20"><path d="M4 3.500h12v12.500h-12z" fill="none" stroke="#3b4650" stroke-width="1.4" stroke-dasharray="2.500 1.500" stroke-linejoin="round"/></svg><svg class="abs" style="left:62.4px;top:226.5px" width="17" height="17" viewBox="0 0 20 20"><path d="M5.500 14.500a3 3 0 0 1-1-5.500a3.500 3.500 0 0 1 5-3.500a3.500 3.500 0 0 1 6 1.500a3 3 0 0 1 1 5.500a3 3 0 0 1-4 2.500a3.500 3.500 0 0 1-7-.5z" fill="none" stroke="#3b4650" stroke-width="1.3" /></svg><svg class="abs" style="left:89.8px;top:226.5px" width="17" height="17" viewBox="0 0 20 20"><path d="M10 2.500a2.800 2.800 0 0 1 3 3a2.800 2.800 0 0 1 3.500 3.500a2.800 2.800 0 0 1-3 4a3 3 0 0 1-4.500 3.500a2.800 2.800 0 0 1-3.500-3.500a2.800 2.800 0 0 1-1.500-4.500a2.800 2.800 0 0 1 3-3.500a2.800 2.800 0 0 1 3-2.500z" fill="none" stroke="#3b4650" stroke-width="1.3" /></svg><svg class="abs" style="left:117.5px;top:226.5px" width="17" height="17" viewBox="0 0 20 20"><path d="M11 2.500h6v4h-6z" fill="#8fb8d0"/><path d="M11 2.500h6v4h-6z" fill="none" stroke="#3b4650" stroke-width="0.9" /><path d="M9 4.500h-4.500M6.500 2.500l-2.300 2l2.300 2" fill="none" stroke="#38a838" stroke-width="1.4" /><path d="M5 17a2 2 0 0 1-1-3.500a2 2 0 0 1 1-3.500a2.200 2.200 0 0 1 4-.5a2.200 2.200 0 0 1 4 0a2 2 0 0 1 2.500 3a2 2 0 0 1-.5 4a2.200 2.200 0 0 1-4 .5a2.200 2.200 0 0 1-4 0a2 2 0 0 1-2 0z" fill="none" stroke="#3b4650" stroke-width="1.3" /></svg><svg class="abs" style="left:6.4px;top:290.8px" width="17" height="17" viewBox="0 0 20 20"><path d="M3 12l8-7.500l6 3l-8 7.500z" fill="#f2bc22"/><path d="M3 12l6 3v2.500l-6-3z" fill="#c08a10"/><path d="M9 15l8-7.500v2.500l-8 7.500z" fill="#e0a818"/><path d="M3 12l8-7.500l6 3v2.500l-8 7.500l-6-3z" fill="none" stroke="#5a4a18" stroke-width="0.9" /><path d="M4 18.500h13" fill="none" stroke="#9aa" stroke-width="1" /></svg><svg class="abs" style="left:34.4px;top:290.8px" width="17" height="17" viewBox="0 0 20 20"><circle cx="9" cy="10" r="5.300" fill="none" stroke="#3b4650" stroke-width="1.300"/><path d="M3 5.500h12M6 3h6.500" fill="none" stroke="#3b4650" stroke-width="1.2" /><path d="M12.500 12.500l5 5M17.500 12.500l-5 5" fill="none" stroke="#e0262a" stroke-width="1.8" /><circle cx="9" cy="10" r="1.2" fill="#1e8ad6"/></svg><svg class="abs" style="left:62.4px;top:290.8px" width="17" height="17" viewBox="0 0 20 20"><path d="M6 14l8.500-8.500" fill="none" stroke="#1e8ad6" stroke-width="1.3" stroke-dasharray="2.200 1.300"/><path d="M16.500 3.500l-4.500.8l3.700 3.700z" fill="#1e8ad6"/><path d="M2.500 13.500h4.500v4.500h-4.500z" fill="#f2bc22"/><path d="M2.500 13.500h4.500v4.500h-4.500z" fill="none" stroke="#5a4a18" stroke-width="0.9" /><path d="M14.500 2.500h3.500v3.500h-3.500z" fill="#fff" stroke="#3b4650" stroke-width="1" /></svg><svg class="abs" style="left:89.8px;top:290.8px" width="17" height="17" viewBox="0 0 20 20"><path d="M9 2v16.500" fill="none" stroke="#1e8ad6" stroke-width="1.2" stroke-dasharray="2.200 1.400"/><path d="M11.500 16.500v-11l6 11z" fill="none" stroke="#3b4650" stroke-width="1.3" /><path d="M6.500 16.500v-8l-4.500 8z" fill="none" stroke="#1e8ad6" stroke-width="1.1" stroke-dasharray="1.800 1.200"/></svg><svg class="abs" style="left:117.5px;top:290.8px" width="17" height="17" viewBox="0 0 20 20"><path d="M6.500 13.500l7-7" fill="none" stroke="#1e8ad6" stroke-width="1.3" stroke-dasharray="2.200 1.300"/><path d="M15.500 4.500l-4 .8l3.200 3.200z" fill="#1e8ad6"/><path d="M2.500 13.500h4v4h-4z" fill="none" stroke="#3b4650" stroke-width="1.1" stroke-dasharray="1.600 1"/><path d="M13.500 2.500h4v4h-4z" fill="none" stroke="#3b4650" stroke-width="1.1" /></svg><svg class="abs" style="left:144.8px;top:290.8px" width="17" height="17" viewBox="0 0 20 20"><path d="M2.500 3.500h14.500v5l-6 7.500h-8.500" fill="none" stroke="#3b4650" stroke-width="1.5" /><path d="M2.500 7.500h10.500v.5l-3.500 4h-7" fill="none" stroke="#3b4650" stroke-width="1.5" /></svg><svg class="abs" style="left:6.4px;top:318.8px" width="17" height="17" viewBox="0 0 20 20"><path d="M2.7 2.7h3.600v3.600h-3.600z" fill="#dfe5ea" stroke="#3b4650" stroke-width="1.1" /><path d="M2.7 8.0h3.600v3.600h-3.600z" fill="#dfe5ea" stroke="#3b4650" stroke-width="1.1" /><path d="M2.7 13.3h3.600v3.600h-3.600z" fill="#dfe5ea" stroke="#3b4650" stroke-width="1.1" /><path d="M8.0 2.7h3.600v3.600h-3.600z" fill="#dfe5ea" stroke="#3b4650" stroke-width="1.1" /><path d="M8.0 8.0h3.600v3.600h-3.600z" fill="#dfe5ea" stroke="#3b4650" stroke-width="1.1" /><path d="M8.0 13.3h3.600v3.600h-3.600z" fill="#dfe5ea" stroke="#3b4650" stroke-width="1.1" /><path d="M13.3 2.7h3.600v3.600h-3.600z" fill="#dfe5ea" stroke="#3b4650" stroke-width="1.1" /><path d="M13.3 8.0h3.600v3.600h-3.600z" fill="#dfe5ea" stroke="#3b4650" stroke-width="1.1" /><path d="M13.3 13.3h3.600v3.600h-3.600z" fill="#dfe5ea" stroke="#3b4650" stroke-width="1.1" /></svg><svg class="abs" style="left:34.4px;top:318.8px" width="17" height="17" viewBox="0 0 20 20"><path d="M3 10.500h7v7h-7z" fill="none" stroke="#3b4650" stroke-width="1.1" stroke-dasharray="1.800 1.100"/><path d="M11.500 9l4 4l-4 4l-4-4z" fill="#fff" stroke="#3b4650" stroke-width="1.1" /><path d="M5 7.500a7 7 0 0 1 10.500-2" fill="none" stroke="#1e8ad6" stroke-width="1.5" /><path d="M17.500 7.500l-4.200-.5l3.200-3.200z" fill="#1e8ad6"/></svg><svg class="abs" style="left:62.4px;top:318.8px" width="17" height="17" viewBox="0 0 20 20"><path d="M3 3h14v14h-14z" fill="none" stroke="#3b4650" stroke-width="1.3" /><path d="M3 10.500h6.500v6.500" fill="none" stroke="#1e8ad6" stroke-width="1.1" stroke-dasharray="1.800 1.100"/><path d="M9 11l5-5" fill="none" stroke="#1e8ad6" stroke-width="1.3" /><path d="M15.500 4.500l-4.200 1l3.200 3.200z" fill="#1e8ad6"/></svg><svg class="abs" style="left:89.8px;top:318.8px" width="17" height="17" viewBox="0 0 20 20"><path d="M3 3h5v14h-5z" fill="#a3b1bf"/><path d="M3 3h5v14h-5z" fill="none" stroke="#3b4650" stroke-width="1.1" /><path d="M8 9h4v8h-4z" fill="#8595a5"/><path d="M8 9h4v8h-4z" fill="none" stroke="#3b4650" stroke-width="1" /><path d="M12.500 13h5" fill="none" stroke="#1e8ad6" stroke-width="1.5" /><path d="M19 13l-3-2.500v5z" fill="#1e8ad6"/><path d="M13 9.500v7" fill="none" stroke="#1e8ad6" stroke-width="1" stroke-dasharray="1.500 1"/></svg><svg class="abs" style="left:117.5px;top:318.8px" width="17" height="17" viewBox="0 0 20 20"><path d="M11.500 2.500h5v5h-5z" fill="none" stroke="#3b4650" stroke-width="1.1" /><path d="M13 11l4 4l-4 4l-4-4z" fill="none" stroke="#1e8ad6" stroke-width="1.1" stroke-dasharray="1.600 1"/><path d="M5 3v14M3 5l2-2.500l2 2.500M3 15l2 2.500l2-2.500" fill="none" stroke="#1e8ad6" stroke-width="1.2" /><path d="M7.500 9l4.500 4.500" fill="none" stroke="#1e8ad6" stroke-width="1.1" /></svg><svg class="abs" style="left:144.8px;top:318.8px" width="17" height="17" viewBox="0 0 20 20"><path d="M4 4.500h5.500q6 0 6 6v6" fill="none" stroke="#3b4650" stroke-width="1.4" /><path d="M15.500 4.500v3M12.500 4.500h3" fill="none" stroke="#1e8ad6" stroke-width="1" stroke-dasharray="1.500 1"/></svg><svg class="abs" style="left:6.4px;top:346.8px" width="17" height="17" viewBox="0 0 20 20"><path d="M3.500 4.500h6q6.500 0 6.500 6.500v5.500" fill="none" stroke="#3b4650" stroke-width="1.4" /><path d="M6.500 10v4M4.500 12h4" fill="none" stroke="#3b4650" stroke-width="1.2" /></svg><svg class="abs" style="left:34.4px;top:346.8px" width="17" height="17" viewBox="0 0 20 20"><path d="M14.500 6v-2.500h-5a6.500 6.500 0 0 0 0 13h5v-4" fill="none" stroke="#3b4650" stroke-width="1.4" /><circle cx="14.500" cy="9.500" r="1.500" fill="#1e8ad6"/></svg><svg class="abs" style="left:62.4px;top:346.8px" width="17" height="17" viewBox="0 0 20 20"><path d="M14.500 5v-1.500h-5a6.500 6.500 0 0 0 0 13h5v-1.500" fill="none" stroke="#3b4650" stroke-width="1.4" /><path d="M14.500 6.500v7" fill="none" stroke="#1e8ad6" stroke-width="2" stroke-dasharray="2 1.300"/></svg><svg class="abs" style="left:89.8px;top:346.8px" width="17" height="17" viewBox="0 0 20 20"><path d="M2 10h5.500M18 10h-5.500" fill="none" stroke="#1e8ad6" stroke-width="1.5" /><path d="M9.500 10l-3.500-2.500v5zM10.500 10l3.500-2.500v5z" fill="#1e8ad6"/></svg><svg class="abs" style="left:117.5px;top:346.8px" width="17" height="17" viewBox="0 0 20 20"><path d="M3 3.500h14" fill="none" stroke="#3b4650" stroke-width="1.6" /><path d="M10 5v13" fill="none" stroke="#1e8ad6" stroke-width="1.3" stroke-dasharray="2.200 1.400"/></svg><svg class="abs" style="left:144.8px;top:346.8px" width="17" height="17" viewBox="0 0 20 20"><path d="M5.500 3l7.500 10.500M14.500 3l-7.500 10.500" fill="none" stroke="#3b4650" stroke-width="1.5" /><circle cx="6" cy="15.300" r="2" fill="none" stroke="#1e8ad6" stroke-width="1.400"/><circle cx="14" cy="15.300" r="2" fill="none" stroke="#1e8ad6" stroke-width="1.400"/><path d="M13.500 7l4.500 3M18 7l-4.500 3" fill="none" stroke="#e0262a" stroke-width="1.2" /><path d="M2 8.500h3" fill="none" stroke="#1e8ad6" stroke-width="1.3" /></svg><svg class="abs" style="left:6.4px;top:374.2px" width="17" height="17" viewBox="0 0 20 20"><path d="M9 4.500h8M9 9.500h6M9 4.500v13" fill="none" stroke="#3b4650" stroke-width="1.6" /><path d="M2.500 5h4v7.500h-4M2.500 12.500v4.500" fill="none" stroke="#1e8ad6" stroke-width="1.3" /></svg><svg class="abs" style="left:34.4px;top:374.2px" width="17" height="17" viewBox="0 0 20 20"><path d="M10 2v16M3 10h4" fill="none" stroke="#1e8ad6" stroke-width="1.1" stroke-dasharray="2 1.300"/><path d="M10 6l4 4l-4 4l-1.500-4z" fill="#3b4650"/><path d="M13 10h4.500" fill="none" stroke="#3b4650" stroke-width="1.2" /></svg><svg class="abs" style="left:62.4px;top:374.2px" width="17" height="17" viewBox="0 0 20 20"><path d="M4 8h12v9.500h-12z" fill="#cfe6f8"/><path d="M4 12l4-4M4 16.500l8.500-8.500M8 17.500l8-8M12.500 17.500l3.500-3.500" fill="none" stroke="#1e8ad6" stroke-width="1.1" /><path d="M4 8h12v9.500h-12z" fill="none" stroke="#1f4f7a" stroke-width="1.1" /><path d="M6 6.500c2-3 6-4 10-2.500l1 2c-3 1-6 2-8 2z" fill="#e8b48a"/><path d="M6 6.500c2-3 6-4 10-2.500l1 2c-3 1-6 2-8 2z" fill="none" stroke="#3a2a1a" stroke-width="0.9" /></svg><svg class="abs" style="left:89.8px;top:374.2px" width="17" height="17" viewBox="0 0 20 20"><path d="M8.500 8.500h8.500v8.500h-8.500z" fill="#8a939c"/><path d="M3.500 3.500h10v10h-10z" fill="#f2bc22"/><path d="M3.500 3.500h10v10h-10z" fill="none" stroke="#5a4a18" stroke-width="1" /></svg><svg class="abs" style="left:117.5px;top:374.2px" width="17" height="17" viewBox="0 0 20 20"><path d="M5 5c2-3 7-3.500 11-1.500l.5 2c-3 .5-6 1.500-8 2z" fill="#e8b48a"/><path d="M5 5c2-3 7-3.500 11-1.500l.5 2c-3 .5-6 1.500-8 2z" fill="none" stroke="#3a2a1a" stroke-width="0.9" /><path d="M4 10.500l5 6l7-4.500" fill="none" stroke="#3b4650" stroke-width="1.2" /><circle cx="4" cy="10.5" r="1.8" fill="#f2bc22" stroke="#5a4a18" stroke-width=".9"/><circle cx="9" cy="16.5" r="1.8" fill="#f2bc22" stroke="#5a4a18" stroke-width=".9"/><circle cx="16" cy="12" r="1.8" fill="#f2bc22" stroke="#5a4a18" stroke-width=".9"/></svg><svg class="abs" style="left:144.8px;top:374.2px" width="17" height="17" viewBox="0 0 20 20"><path d="M6 14l8-8" fill="none" stroke="#3b4650" stroke-width="1.2" /><path d="M3.500 9a6 6 0 0 1 5-5.500M16.500 11a6 6 0 0 1-5 5.500" fill="none" stroke="#1e8ad6" stroke-width="1.5" /><path d="M9.500 1.500l-.5 4l-2.500-2zM10.500 18.500l.5-4l2.500 2z" fill="#1e8ad6"/><circle cx="6" cy="14" r="2.1" fill="#f2bc22" stroke="#5a4a18" stroke-width=".9"/><circle cx="14" cy="6" r="2.1" fill="#f2bc22" stroke="#5a4a18" stroke-width=".9"/></svg><svg class="abs" style="left:6.4px;top:401.9px" width="17" height="17" viewBox="0 0 20 20"><path d="M3 2.500h14M3 17.500h14" fill="none" stroke="#3b4650" stroke-width="1.4" /><path d="M5 5h10v10h-10z" fill="#1e8ad6"/><path d="M3.500 4.500v11M16.500 4.500v11" fill="none" stroke="#1e8ad6" stroke-width="1.1" /></svg><svg class="abs" style="left:34.4px;top:401.9px" width="17" height="17" viewBox="0 0 20 20"><path d="M3 2.500h14M3 17.500h14" fill="none" stroke="#3b4650" stroke-width="1.4" /><path d="M4.500 5h11v10h-11z" fill="#e2effa" stroke="#1e8ad6" stroke-width="1" /><text x="5.800" y="13.200" font-size="8" font-weight="bold" fill="#1e8ad6" font-family="Liberation Sans,sans-serif">A</text><circle cx="13.200" cy="8" r="1.2" fill="#1e8ad6"/></svg><svg class="abs" style="left:6.4px;top:448.1px" width="17" height="17" viewBox="0 0 20 20"><path d="M3 6l7-3.500l7 3.500v8.500l-7 3.500l-7-3.500z" fill="#a3b1bf"/><path d="M3 6l7 3.500v8.500l-7-3.500z" fill="#8595a5"/><path d="M3 6l7-3.500l7 3.500v8.500l-7 3.500l-7-3.500zM3 6l7 3.500l7-3.500M10 9.500v8.500" fill="none" stroke="#3b4650" stroke-width="1.1" /></svg><svg class="abs" style="left:34.4px;top:448.1px" width="17" height="17" viewBox="0 0 20 20"><path d="M10 2.500l7 12.500c0 3-14 3-14 0z" fill="#a3b1bf"/><path d="M10 2.500l7 12.500c0 1.500-3.500 2.300-7 2.300z" fill="#8595a5"/><path d="M10 2.500l7 12.500c0 3-14 3-14 0z" fill="none" stroke="#3b4650" stroke-width="1.1" /></svg><svg class="abs" style="left:62.4px;top:448.1px" width="17" height="17" viewBox="0 0 20 20"><path d="M4.500 5v10.500c0 3 11 3 11 0v-10.500z" fill="#8595a5"/><ellipse cx="10" cy="5" rx="5.500" ry="2.300" fill="#b5c2cd" stroke="#3b4650" stroke-width="1.100"/><path d="M4.500 5v10.500c0 3 11 3 11 0v-10.500" fill="none" stroke="#3b4650" stroke-width="1.1" /></svg><svg class="abs" style="left:89.8px;top:448.1px" width="17" height="17" viewBox="0 0 20 20"><path d="M10 2.500l7.500 11.500l-6.500 4l-8.500-3.500z" fill="#a3b1bf"/><path d="M10 2.500l7.500 11.500l-6.500 4z" fill="#8595a5"/><path d="M10 2.500l7.500 11.500l-6.500 4l-8.500-3.500zM10 2.500l1 15.500" fill="none" stroke="#3b4650" stroke-width="1.1" /></svg><svg class="abs" style="left:117.5px;top:448.1px" width="17" height="17" viewBox="0 0 20 20"><circle cx="10" cy="10" r="7.300" fill="#a3b1bf" stroke="#3b4650" stroke-width="1.100"/><path d="M15.500 5.500a7.300 7.300 0 0 1-10 10.500a8 8 0 0 0 10-10.500z" fill="#8595a5"/></svg><svg class="abs" style="left:144.8px;top:448.1px" width="17" height="17" viewBox="0 0 20 20"><ellipse cx="10" cy="10.500" rx="8" ry="6.300" fill="#8595a5" stroke="#3b4650" stroke-width="1.100"/><ellipse cx="10" cy="9.800" rx="3.300" ry="2.200" fill="#ececec" stroke="#3b4650" stroke-width="1.100"/></svg><svg class="abs" style="left:6.4px;top:475.9px" width="17" height="17" viewBox="0 0 20 20"><path d="M4 3l2.500 1l8.500 12.500l-2.500 1.500h-8.500z" fill="#a3b1bf"/><path d="M6.500 4v14h6z" fill="#8595a5"/><path d="M4 3l2.500 1l8.500 12.500l-2.500 1.500h-8.500zM6.500 4v14M6.500 4l6 14" fill="none" stroke="#3b4650" stroke-width="1.1" /></svg><svg class="abs" style="left:34.4px;top:475.9px" width="17" height="17" viewBox="0 0 20 20"><path d="M6 4h12l-4 12h-12z" fill="#a3b1bf"/><path d="M6 4h12l-4 12h-12zM10 4l-4 12M14 4l-4 12M4.700 8h12M3.300 12h12" fill="none" stroke="#3b4650" stroke-width="1" /></svg><svg class="abs" style="left:62.4px;top:475.9px" width="17" height="17" viewBox="0 0 20 20"><path d="M3.500 8l5.500-2.500l5.500 2.500v7.500l-5.500 2.500l-5.500-2.500z" fill="#fff"/><path d="M3.500 8l5.500 2.500l5.500-2.500l-5.500-2.500z" fill="#8595a5"/><path d="M3.500 12l5.500 2.500l5.500-2.500v3.500l-5.500 2.500l-5.500-2.500z" fill="#8595a5"/><path d="M3.500 8l5.500-2.500l5.500 2.500v7.500l-5.500 2.500l-5.500-2.500zM3.500 8l5.500 2.500l5.500-2.500M9 10.500v7.500" fill="none" stroke="#3b4650" stroke-width="1" /><path d="M16.500 8v-5M14.500 4.800l2-2.300l2 2.300" fill="none" stroke="#1e8ad6" stroke-width="1.4" /></svg><svg class="abs" style="left:89.8px;top:475.9px" width="17" height="17" viewBox="0 0 20 20"><path d="M4.500 3h11c0 3-3 4-3 7s3 4 3 7h-11c0-3 3-4 3-7s-3-4-3-7z" fill="#8595a5"/><ellipse cx="10" cy="3.300" rx="5.500" ry="1.500" fill="#b5c2cd" stroke="#3b4650" stroke-width="1"/><path d="M4.500 3.300c0 3 3 3.700 3 6.700s-3 4-3 7c2 1.500 9 1.500 11 0c0-3-3-4-3-7s3-3.700 3-6.700" fill="none" stroke="#3b4650" stroke-width="1.1" /></svg><svg class="abs" style="left:117.5px;top:475.9px" width="17" height="17" viewBox="0 0 20 20"><path d="M4 3.500h9l3 2v12.500h-5v-9h-7z" fill="#a3b1bf"/><path d="M13 3.500l3 2v12.500h-2.500v-11.500z" fill="#8595a5"/><path d="M4 3.500h9l3 2v12.500h-5v-9h-7zM13 3.500v3M11 9l2.500-2.500" fill="none" stroke="#3b4650" stroke-width="1.1" /></svg><svg class="abs" style="left:144.8px;top:475.9px" width="17" height="17" viewBox="0 0 20 20"><path d="M4 9l6-2.500l6 2.500v5.500l-6 3l-6-3z" fill="#8595a5"/><path d="M4 9l6 2.500l6-2.500l-6-2.500z" fill="#a3b1bf"/><path d="M4 9l6-2.500l6 2.500v5.500l-6 3l-6-3zM4 9l6 2.500l6-2.500M10 11.500v6" fill="none" stroke="#3b4650" stroke-width="1" /><path d="M2 17.500l3-2M18 17.500l-3-2M6 19l1.500-2.500M14 19l-1.500-2.500" fill="none" stroke="#3b4650" stroke-width="1" /><path d="M10 5v-3.500M8.300 3l1.700-2l1.700 2" fill="none" stroke="#1e8ad6" stroke-width="1.3" /></svg><svg class="abs" style="left:6.4px;top:503.5px" width="17" height="17" viewBox="0 0 20 20"><path d="M3 9.500l4-2h6l4 2v6l-4 2.500h-6l-4-2.500z" fill="#fff"/><path d="M3 9.500l4 2h6l4-2l-4-2h-6z" fill="#8595a5"/><path d="M3 9.500l4-2h6l4 2v6l-4 2.500h-6l-4-2.500zM3 9.500l4 2h6l4-2M7 11.500v6.500M13 11.500v6.500" fill="none" stroke="#3b4650" stroke-width="1.1" /><path d="M5 5.500a6 5 0 0 1 9.500-1" fill="none" stroke="#1e8ad6" stroke-width="1.5" /><path d="M16 6.500l-4-.3l2.800-3z" fill="#1e8ad6"/></svg><svg class="abs" style="left:34.4px;top:503.5px" width="17" height="17" viewBox="0 0 20 20"><path d="M3 5c7-1 11 3 12 9.500a2.300 2.300 0 0 1-4.500 1c-1-4-3-6-7.500-6z" fill="#a3b1bf"/><path d="M3 5c7-1 11 3 12 9.500a2.300 2.300 0 0 1-4.500 1c-1-4-3-6-7.500-6z" fill="none" stroke="#3b4650" stroke-width="1.1" /><circle cx="12.800" cy="15" r="2.200" fill="#fff" stroke="#3b4650" stroke-width="1"/></svg><svg class="abs" style="left:62.4px;top:503.5px" width="17" height="17" viewBox="0 0 20 20"><circle cx="7.200" cy="10" r="5.300" fill="#1e8ad6" stroke="#0d4f86" stroke-width="1"/><circle cx="12.800" cy="10" r="5.300" fill="#1e8ad6" stroke="#0d4f86" stroke-width="1"/><path d="M10 5.600a5.300 5.300 0 0 1 0 8.800a5.300 5.300 0 0 1 0-8.800z" fill="#0f6bb5"/></svg><svg class="abs" style="left:89.8px;top:503.5px" width="17" height="17" viewBox="0 0 20 20"><circle cx="12.800" cy="10" r="5.300" fill="#fff" stroke="#3b4650" stroke-width="1.100"/><circle cx="7.200" cy="10" r="5.300" fill="#1e8ad6" stroke="#0d4f86" stroke-width="1"/><path d="M10 5.600a5.300 5.300 0 0 1 0 8.800" fill="none" stroke="#0d4f86" stroke-width="1" /></svg><svg class="abs" style="left:117.5px;top:503.5px" width="17" height="17" viewBox="0 0 20 20"><circle cx="7.200" cy="10" r="5.300" fill="#fff" stroke="#3b4650" stroke-width="1.100"/><circle cx="12.800" cy="10" r="5.300" fill="none" stroke="#3b4650" stroke-width="1.100"/><path d="M10 5.600a5.300 5.300 0 0 1 0 8.800a5.300 5.300 0 0 1 0-8.800z" fill="#dfe9f2" stroke="#3b4650" stroke-width="1" /></svg><svg class="abs" style="left:144.8px;top:503.5px" width="17" height="17" viewBox="0 0 20 20"><path d="M3 4l9 2v8.500l-9-2z" fill="#a3b1bf"/><path d="M3 4l9 2v8.500l-9-2zM3 4l3-1.500l9 2l-3 1.500M15 4.500v5" fill="none" stroke="#3b4650" stroke-width="1.1" /><circle cx="7.500" cy="9.300" r="2.300" fill="#ececec" stroke="#3b4650" stroke-width="1"/><path d="M15.500 11v5" fill="none" stroke="#1e8ad6" stroke-width="1.4" /><circle cx="16" cy="16.500" r="1.800" fill="none" stroke="#1e8ad6" stroke-width="1.300"/></svg><svg class="abs" style="left:6.4px;top:531.7px" width="17" height="17" viewBox="0 0 20 20"><path d="M11 3l4.500 14.500l-4.500-1.500z" fill="#8595a5"/><path d="M11 3l4.500 14.500l-4.500-1.500zM11 3l2 14" fill="none" stroke="#3b4650" stroke-width="1.1" /><path d="M10 3.500l-7 9l7 3.500" fill="none" stroke="#1e8ad6" stroke-width="1.1" stroke-dasharray="1.800 1.200"/></svg><svg class="abs" style="left:34.4px;top:531.7px" width="17" height="17" viewBox="0 0 20 20"><path d="M2.500 9.500l4-2l4 2v5l-4 2l-4-2z" fill="#8595a5"/><path d="M9.500 7.500l4-2l4 2v5l-4 2l-4-2z" fill="#8595a5"/><path d="M2.500 9.500l4-2l4 2v5l-4 2l-4-2zM2.500 9.500l4 2l4-2M6.500 11.500v5M9.500 7.500l4-2l4 2v5l-4 2l-3-1.500M9.500 7.500l4 2l4-2M13.500 9.500v5" fill="none" stroke="#3b4650" stroke-width="1" /></svg><svg class="abs" style="left:62.4px;top:531.7px" width="17" height="17" viewBox="0 0 20 20"><circle cx="10" cy="10" r="7.500" fill="#fff" stroke="#38a838" stroke-width="1.200"/><path d="M10 4.500a5.500 5.500 0 0 1 5.300 4" fill="none" stroke="#e0262a" stroke-width="1.5" /><path d="M4.700 11.500a5.500 5.500 0 0 1 2-5.500" fill="none" stroke="#1e8ad6" stroke-width="1.5" /><path d="M14.500 13a5.500 5.500 0 0 1-7.500 2" fill="none" stroke="#7a5ac8" stroke-width="1.5" /><path d="M9 9h2.500v2.500h-2.500z" fill="#e0262a"/><path d="M7 11.500h2v2h-2z" fill="#1e8ad6"/></svg><div class="abs" style="left:0;top:570px;width:181px;height:25px;border-top:1px solid #d0d0d0;background:linear-gradient(to right,#f2f2f2 0,#ececec 40%,#c9c9c9 100%)"></div><svg class="abs" style="left:70px;top:577px" width="44" height="12" viewBox="0 0 44 12"><path d="M1 6l6-5.5v11z" fill="#111"/><path d="M9 6l6-5.5v11z" fill="#111"/><path d="M17 6l6-5.5v11z" fill="#111"/><path d="M25 6l6-5.5v11z" fill="#111"/><path d="M33 6l6-5.5v11z" fill="#111"/></svg></div><div id="dc" class="abs"><div class="abs" style="left:0;top:0;width:321px;height:17.600px;background:#f3f1f2;border-bottom:1px solid #dedede;text-align:center;font-size:10.5px;color:#5a5a5a;line-height:16.5px">Drawing Compare</div><div class="tl" style="left:4px;top:4.2px;width:8px;height:8px;background:#f4544d;box-shadow:inset 0 0 0 .5px rgba(0,0,0,.15)"></div><div class="tl" style="left:17.4px;top:4.2px;width:8px;height:8px;background:#d8d8d8;box-shadow:inset 0 0 0 .5px rgba(0,0,0,.15)"></div><div class="tl" style="left:30.8px;top:4.2px;width:8px;height:8px;background:#d8d8d8;box-shadow:inset 0 0 0 .5px rgba(0,0,0,.15)"></div><div class="btn" style="left:8px;top:26.800px;width:58.5px;height:23.200px;font-size:9.8px;color:#444;text-align:center;line-height:21.5px;text-shadow:0 0 .4px #444">Load file...</div><div class="fld" style="left:73px;top:29.200px;width:211px;height:19.500px;overflow:hidden"><div style="position:absolute;right:3px;top:0;white-space:nowrap;font-size:12.5px;line-height:19.5px;color:#222">/Desktop/Projects/Witzek House - A.dwg</div></div><div class="btn" style="left:290px;top:26.800px;width:23px;height:23.200px;font-weight:bold;font-size:12.200px;text-align:center;line-height:21.5px;color:#222">?</div><div class="btn" style="left:8px;top:60px;width:22.5px;height:22.5px"><svg width="21" height="21" viewBox="0 0 21 21"><path d="M7 6v-3h5l3 3v4M12 3v3h3" fill="#f6f6f6" stroke="#3b4650" stroke-width="1.100"/><path d="M3.500 6.500h5l3 3v7.500h-8z" fill="#f6f6f6" stroke="#3b4650" stroke-width="1.100"/><path d="M8.500 6.500v3h3" fill="none" stroke="#3b4650" stroke-width="1"/><circle cx="14.800" cy="15" r="2.600" fill="#2fa84a"/></svg></div><div class="fld" style="left:81px;top:61.5px;width:21.5px">0</div><div class="abs" style="left:108px;top:62px;width:10px;text-align:center;font-size:12.5px;line-height:20px">/</div><div class="fld" style="left:125px;top:61.5px;width:22.5px">15</div><div class="btn" style="left:157.3px;top:60px;width:22.6px;height:22.5px"><svg width="21" height="21" viewBox="0 0 21 21"><path d="M6.500 10.500h8.500" fill="none" stroke="#111" stroke-width="1.500"/><path d="M5.500 10.500l4-3v6z" fill="#111"/></svg></div><div class="btn" style="left:189.200px;top:60px;width:22.6px;height:22.5px"><svg width="21" height="21" viewBox="0 0 21 21"><path d="M6 10.500h8.500" fill="none" stroke="#111" stroke-width="1.500"/><path d="M15.500 10.500l-4-3v6z" fill="#111"/></svg></div><div class="btn" style="left:261px;top:60px;width:23px;height:22.5px"><svg width="21" height="21" viewBox="0 0 21 21"><path d="M6 10.500v-4.500h6.500l2.500 2.500v2z" fill="#fff" stroke="#6a7682" stroke-width=".9"/><path d="M7.500 6.500a3.500 3.500 0 0 1 4.500-1.800" fill="none" stroke="#1e8ad6" stroke-width="1.600"/><path d="M14 5.500l-3.500-.2l2.400-2.500z" fill="#1e8ad6"/><rect x="4.800" y="10.500" width="11.400" height="5.200" fill="#2a2f35"/><path d="M6.300 11.800v2.600M6.300 11.800c1.800 0 1.800 2.600 0 2.600M9 11.800l.8 2.600l.8-1.800l.8 1.800l.8-2.600M14.800 12.200c-1.800-.8-2.200 2.600 0 1.800v-.9" stroke="#fff" stroke-width=".7" fill="none"/></svg></div><div class="btn" style="left:290px;top:60px;width:23px;height:22.5px"><svg width="21" height="21" viewBox="0 0 21 21"><path d="M7 13.300h-1.500a1.200 1.200 0 0 1-1.200-1.200v-4.800a1.200 1.200 0 0 1 1.200-1.200h10a1.200 1.200 0 0 1 1.200 1.200v4.800a1.200 1.200 0 0 1-1.200 1.200h-1.500" fill="none" stroke="#111" stroke-width="1.500"/><path d="M12.500 13.300h-3" fill="none" stroke="#111" stroke-width="1.500"/><path d="M7.300 13.300l3-2.300v4.600z" fill="#111"/></svg></div><div class="sech" style="top:90.5px">Differences</div><div class="secb" style="top:114.5px;height:123px"></div><div class="lab" style="top:127.69999999999999px">Not in current drawing</div><div class="lab" style="top:154.8px">Only in current drawing</div><div class="lab" style="top:182px">No difference</div><div class="lab" style="top:208.9px">Current drawing display</div><div class="sel" style="top:127.5px"><i class="dot" style="background:#e8101c"></i>Red<b><svg width="15" height="15" viewBox="0 0 15 15"><path d="M4.600 6l2.800-2.800L10.200 6M4.600 9l2.800 2.800L10.200 9" fill="none" stroke="#fff" stroke-width="1.5" stroke-linecap="round" stroke-linejoin="round"/></svg></b></div><div class="sel" style="top:154.8px"><i class="dot" style="background:#3fc81c"></i>Color 82<b><svg width="15" height="15" viewBox="0 0 15 15"><path d="M4.600 6l2.800-2.800L10.200 6M4.600 9l2.800 2.800L10.200 9" fill="none" stroke="#fff" stroke-width="1.5" stroke-linecap="round" stroke-linejoin="round"/></svg></b></div><div class="sel" style="top:181.9px"><i class="dot" style="background:#adadad"></i>Color 253<b><svg width="15" height="15" viewBox="0 0 15 15"><path d="M4.600 6l2.800-2.800L10.200 6M4.600 9l2.800 2.800L10.200 9" fill="none" stroke="#fff" stroke-width="1.5" stroke-linecap="round" stroke-linejoin="round"/></svg></b></div><div class="sel" style="top:208.5px">Front<b><svg width="15" height="15" viewBox="0 0 15 15"><path d="M4.600 6l2.800-2.800L10.200 6M4.600 9l2.800 2.800L10.200 9" fill="none" stroke="#fff" stroke-width="1.5" stroke-linecap="round" stroke-linejoin="round"/></svg></b></div><div class="sech" style="top:244.5px">Clouds</div><div class="secb" style="top:268.5px;height:121.5px"></div><div class="lab" style="top:281.8px">Show</div><div class="lab" style="top:308.5px">Display color</div><div class="lab" style="top:335.1px">Shape</div><div class="lab" style="top:361.3px">Size</div><div class="sel" style="top:281.5px">Yes<b><svg width="15" height="15" viewBox="0 0 15 15"><path d="M4.600 6l2.800-2.800L10.200 6M4.600 9l2.800 2.800L10.200 9" fill="none" stroke="#fff" stroke-width="1.5" stroke-linecap="round" stroke-linejoin="round"/></svg></b></div><div class="sel" style="top:308.2px"><i class="dot" style="background:#1fe6e6"></i>C&#8201;yan<b><svg width="15" height="15" viewBox="0 0 15 15"><path d="M4.600 6l2.800-2.800L10.200 6M4.600 9l2.800 2.800L10.200 9" fill="none" stroke="#fff" stroke-width="1.5" stroke-linecap="round" stroke-linejoin="round"/></svg></b></div><div class="sel" style="top:334.8px">Rectangle<b><svg width="15" height="15" viewBox="0 0 15 15"><path d="M4.600 6l2.800-2.800L10.200 6M4.600 9l2.800 2.800L10.200 9" fill="none" stroke="#fff" stroke-width="1.5" stroke-linecap="round" stroke-linejoin="round"/></svg></b></div><div class="abs" style="left:172px;top:368.5px;width:121px;height:2px;background:#d4d4d4;border-radius:1px"></div><div class="abs" style="left:166px;top:363px;width:13px;height:13px;border-radius:50%;background:#fff;box-shadow:0 0 0 .5px rgba(0,0,0,.15),0 1px 2px rgba(0,0,0,.3)"></div><div class="sech" style="top:396.5px">Filters</div><div class="secb" style="top:420.5px;height:69.5px"></div><div class="lab" style="top:433.2px">Hatch</div><div class="lab" style="top:459.8px">Note</div><div class="sel" style="top:433px">No<b><svg width="15" height="15" viewBox="0 0 15 15"><path d="M4.600 6l2.800-2.800L10.200 6M4.600 9l2.800 2.800L10.200 9" fill="none" stroke="#fff" stroke-width="1.5" stroke-linecap="round" stroke-linejoin="round"/></svg></b></div><div class="sel" style="top:459.6px">No<b><svg width="15" height="15" viewBox="0 0 15 15"><path d="M4.600 6l2.800-2.800L10.200 6M4.600 9l2.800 2.800L10.200 9" fill="none" stroke="#fff" stroke-width="1.5" stroke-linecap="round" stroke-linejoin="round"/></svg></b></div></div><div id="dock" class="abs"></div><svg class="abs" style="left:395px;top:745px" width="497" height="59" viewBox="395 745 497 59"><defs>
<linearGradient id="fg1" x1="0" y1="0" x2="0" y2="1"><stop offset="0" stop-color="#3fb6f8"/><stop offset="1" stop-color="#1a73e8"/></linearGradient>
<linearGradient id="sirig" x1="0" y1="0" x2="1" y2="1"><stop offset="0" stop-color="#3a1660"/><stop offset=".5" stop-color="#1c1c4c"/><stop offset="1" stop-color="#14284a"/></linearGradient>
<linearGradient id="cadg" x1="0" y1="0" x2="1" y2="1"><stop offset="0" stop-color="#7a0a16"/><stop offset="1" stop-color="#a80f20"/></linearGradient>
<linearGradient id="peng" x1="0" y1="0" x2="1" y2="1"><stop offset="0" stop-color="#6fe23a"/><stop offset="1" stop-color="#2fae1e"/></linearGradient>
<linearGradient id="camg" x1="0" y1="0" x2="1" y2="1"><stop offset="0" stop-color="#d0142c"/><stop offset="1" stop-color="#a00c20"/></linearGradient>
<linearGradient id="fng" x1="0" y1="0" x2="1" y2="1"><stop offset="0" stop-color="#38b0dc"/><stop offset="1" stop-color="#1a86b8"/></linearGradient>
<linearGradient id="trg" x1="0" y1="0" x2="1" y2="0"><stop offset="0" stop-color="#c9cbe0"/><stop offset=".5" stop-color="#f4f4fa"/><stop offset="1" stop-color="#cfd0e4"/></linearGradient>
<radialGradient id="orb" cx=".5" cy=".5" r=".5"><stop offset="0" stop-color="#b88af0"/><stop offset=".45" stop-color="#6a4ac8"/><stop offset=".8" stop-color="#3a3a9a"/><stop offset="1" stop-color="#26265e"/></radialGradient>
<linearGradient id="spg" x1="0" y1="0" x2="0" y2="1"><stop offset="0" stop-color="#d4d5d8"/><stop offset="1" stop-color="#8a8b8f"/></linearGradient>
<clipPath id="orbclip"><circle cx="461.500" cy="772" r="14.300"/></clipPath>
<radialGradient id="sm"><stop offset="0" stop-color="#f0309a"/><stop offset=".6" stop-color="#c0288a" stop-opacity=".7"/><stop offset="1" stop-color="#c0288a" stop-opacity="0"/></radialGradient>
<radialGradient id="st"><stop offset="0" stop-color="#28d0a8"/><stop offset=".6" stop-color="#1a9a88" stop-opacity=".6"/><stop offset="1" stop-color="#1a9a88" stop-opacity="0"/></radialGradient>
<radialGradient id="sb"><stop offset="0" stop-color="#2a7ae0"/><stop offset=".6" stop-color="#2a5ac0" stop-opacity=".7"/><stop offset="1" stop-color="#2a5ac0" stop-opacity="0"/></radialGradient>
<radialGradient id="sc"><stop offset="0" stop-color="#30b8e8"/><stop offset="1" stop-color="#30b8e8" stop-opacity="0"/></radialGradient>
<radialGradient id="sw"><stop offset="0" stop-color="#fff"/><stop offset=".4" stop-color="#fff" stop-opacity=".8"/><stop offset="1" stop-color="#fff" stop-opacity="0"/></radialGradient>
</defs><rect x="402" y="755.500" width="33" height="33" rx="7.500" fill="url(#fg1)"/><path d="M419 755.500h8.500a7.500 7.500 0 0 1 7.500 7.500v18a7.500 7.500 0 0 1-7.500 7.500h-6c-1.500-5-1.500-9-1-13h-4c0-8 1-14 2.500-20z" fill="#e9f1fb"/><path d="M411 765.800v2.200M426.800 765.800v2.200" stroke="#1d2a44" stroke-width="1.700" stroke-linecap="round"/><path d="M408.500 778c5 4.500 15 4.500 20.500 0" stroke="#1d2a44" stroke-width="1.300" fill="none" stroke-linecap="round"/><rect x="445" y="755.500" width="33" height="33" rx="7.500" fill="url(#sirig)"/><g clip-path="url(#orbclip)"><circle cx="461.500" cy="772" r="14.300" fill="#1a2458"/><circle cx="463" cy="762.500" r="9" fill="url(#sm)"/><circle cx="471.500" cy="773" r="8" fill="url(#st)"/><circle cx="454" cy="779" r="10" fill="url(#sb)"/><circle cx="452" cy="768" r="6" fill="url(#sc)"/><path d="M461.500 772l-10.500 8.500l2 1.500zM461.500 772l4.500 12.500l-2.300.5zM461.500 772l11-5l.5 2z" fill="#bff" opacity=".75"/><path d="M461.500 772l3.500 12l1.500-.5z" fill="#ff5ab8" opacity=".9"/><circle cx="461.500" cy="771.500" r="4.500" fill="url(#sw)"/></g><circle cx="461.500" cy="772" r="14.300" fill="none" stroke="#93a0b8" stroke-width=".8" opacity=".85"/><rect x="488" y="755.500" width="33" height="33" rx="7.500" fill="#f2f3f7"/><circle cx="504.500" cy="772" r="13.500" fill="#1e90f0"/><circle cx="504.500" cy="772" r="13.500" fill="none" stroke="#e6ebf2" stroke-width="1.200"/><circle cx="504.500" cy="772" r="11.500" fill="none" stroke="#bfe0ff" stroke-width="1.500" stroke-dasharray=".7 1.300" opacity=".8"/><path d="M513.800 762.700l-7.500 11.100l-3.600-3.600z" fill="#ff4a3a"/><path d="M495.200 781.300l7.500-11.100l3.600 3.600z" fill="#f4f4f4"/><rect x="527" y="752" width="40.800" height="40.800" rx="10.500" fill="url(#cadg)"/><path d="M537 752h20.300a10.500 10.500 0 0 1 10.500 10.500v8l-14 4l-6-22.500z" fill="#5c0610" opacity=".4"/><path d="M527 775l13-6l4 23.800h-6.500a10.500 10.500 0 0 1-10.500-10.500z" fill="#c01a2c" opacity=".35"/><path d="M544.300 753.700v37.800M529 776h36.500" stroke="#fff" stroke-width="2.100"/><rect x="537.300" y="769" width="14" height="14" fill="#8a0c18" stroke="#fff" stroke-width="2"/><rect x="542" y="773.700" width="4.600" height="4.600" fill="#fff"/><path d="M582 752h25.500a3 3 0 0 1 3 3v26a11.500 11.500 0 0 1-11.500 11.500h-17a11.500 11.500 0 0 1-11.500-11.500v-17.500a11.500 11.500 0 0 1 11.500-11.500z" fill="url(#peng)"/><path d="M578.500 763.300a2.900 2.900 0 0 1 4.100-4.100l17.500 17.500l2.600 6.700l-6.700-2.600z" fill="#f4f6f2"/><path d="M583.800 760.400l-4.100 4.100l1.500 1.500l4.100-4.100z" fill="#b9c4b4"/><path d="M598.800 779.500l2.800-2.800l1.600 7l-.5.500z" fill="#c9d2c4"/><rect x="612.500" y="752" width="40.500" height="40.500" rx="11" fill="url(#camg)"/><path d="M630 752h12a11 11 0 0 1 11 11v12z" fill="#e01c38" opacity=".45"/><circle cx="630.500" cy="773.500" r="11.500" fill="#f4f4f4"/><circle cx="630.500" cy="773.500" r="6.500" fill="#c9c9c9"/><circle cx="630.500" cy="773.500" r="4" fill="#9a9a9a"/><circle cx="646.500" cy="760.500" r="2.300" fill="#fff"/><path d="M667 752h26a3 3 0 0 1 3 3v26a11.500 11.500 0 0 1-11.500 11.500h-17.500a11.500 11.500 0 0 1-11.500-11.500v-17.500a11.500 11.500 0 0 1 11.500-11.500z" fill="url(#fng)"/><path d="M655.500 777l40.500-15v19a11.500 11.500 0 0 1-11.500 11.500h-17.500a11.500 11.500 0 0 1-11.500-11.500z" fill="#157aa8" opacity=".5"/><text x="678" y="783" font-family="'Liberation Serif',serif" font-weight="bold" font-size="30" fill="#f4f4f4" text-anchor="middle">f</text><rect x="699.500" y="754.500" width="39.500" height="30" rx="1.500" fill="#d9dde6"/><rect x="699.500" y="754.500" width="39.500" height="25" rx="1.500" fill="#20242c"/><rect x="701" y="756" width="36.500" height="22.500" fill="#1f86ea"/><path d="M701 772l36.500-10v16.500h-36.500z" fill="#36a0f4" opacity=".6"/><path d="M713 761.500l5-.8v5.300h-5zM718.800 760.600l6-.9v6.300h-6zM713 766.800h5v5.200l-5-.7zM718.800 766.800h6v6.200l-6-.9z" fill="#bfe2ff" opacity=".9"/><path d="M714 784.500h10.500l1.300 4h-13.100z" fill="#c3c7d1"/><rect x="710" y="788.500" width="18.500" height="2" rx=".8" fill="#e4e6ec"/><rect x="722" y="752" width="6" height="40" rx="1.200" fill="#ea2a1c"/><rect x="730.600" y="752" width="6" height="40" rx="1.200" fill="#ea2a1c"/><rect x="745.500" y="755.500" width="33" height="33" rx="7.500" fill="#dcd8ec"/><rect x="751.0" y="761.0" width="6.500" height="6.500" rx="1.600" fill="#3ad03a"/><rect x="759.2" y="761.0" width="6.500" height="6.500" rx="1.600" fill="#ffc02a"/><rect x="767.4" y="761.0" width="6.500" height="6.500" rx="1.600" fill="#ff8a2a"/><rect x="751.0" y="769.2" width="6.500" height="6.500" rx="1.600" fill="#e8202a"/><rect x="759.2" y="769.2" width="6.500" height="6.500" rx="1.600" fill="#b4b4c0"/><rect x="767.4" y="769.2" width="6.500" height="6.500" rx="1.600" fill="#ff4a7a"/><rect x="751.0" y="777.4" width="6.500" height="6.500" rx="1.600" fill="#a83ae0"/><rect x="759.2" y="777.4" width="6.500" height="6.500" rx="1.600" fill="#2a9af8"/><rect x="767.4" y="777.4" width="6.500" height="6.500" rx="1.600" fill="#2ad0a0"/><rect x="788.500" y="755.500" width="33" height="33" rx="7.500" fill="url(#spg)"/><circle cx="805" cy="772" r="13.200" fill="#4d4f53"/><circle cx="805" cy="772" r="11.300" fill="#9a9c9f"/><circle cx="805" cy="772" r="9.300" fill="#55575b"/><circle cx="805" cy="772" r="7.800" fill="#8d8f92"/><path d="M805 772l0-8.500M805 772l7.400 4.300M805 772l-7.400 4.300" stroke="#4a4c50" stroke-width="2.200"/><circle cx="805" cy="772" r="2.300" fill="#4a4c50"/><rect x="835.700" y="756" width=".9" height="35" fill="rgba(50,40,100,.7)"/><path d="M852.500 758c0-2.500 29-2.500 29 0l-3.300 29.500c-.3 2.800-22.100 2.800-22.400 0z" fill="url(#trg)" opacity=".95"/><ellipse cx="867" cy="758" rx="14.500" ry="2.600" fill="#e9eaf4" stroke="#fff" stroke-width=".8"/><circle cx="418.5" cy="796" r="1.400" fill="#1a1a2a"/><circle cx="504.5" cy="796" r="1.400" fill="#1a1a2a"/><circle cx="547.2" cy="796" r="1.400" fill="#1a1a2a"/></svg><div id="menubar" class="abs"><svg class="abs" style="left:19.500px;top:3px" width="12.500" height="15" viewBox="0 0 14 17"><path fill="#fff" d="M9.9 2.7c.6-.8 1-1.800.9-2.700-.9.100-1.900.600-2.500 1.300-.6.700-1 1.600-.9 2.500 1 .1 1.900-.4 2.500-1.100zM13.300 12.200c-.4.900-.6 1.300-1.100 2-.7 1.100-1.700 2.400-2.900 2.400-1.100 0-1.400-.7-2.800-.7-1.500 0-1.800.7-2.900.7-1.200 0-2.100-1.200-2.800-2.300C-1.200 11.400-.4 7 2 5.600c.8-.5 1.700-.8 2.500-.8 1.300 0 2.100.7 3.100.7 1 0 1.600-.7 3.100-.7 1.100 0 2.300.6 3.100 1.600-2.700 1.500-2.300 5.300-.5 5.800z"/></svg><span style="left:51px;transform:scaleX(0.908);font-weight:bold;letter-spacing:-.1px">CorelCAD 2021</span><span style="left:157px;transform:scaleX(0.939)">File</span><span style="left:194px;transform:scaleX(0.965)">Edit</span><span style="left:233px;transform:scaleX(0.944)">View</span><span style="left:278px;transform:scaleX(0.967)">Insert</span><span style="left:327px;transform:scaleX(0.924)">Format</span><span style="left:383px;transform:scaleX(0.922)">Dimension</span><span style="left:459px;transform:scaleX(0.932)">Draw</span><span style="left:505px;transform:scaleX(0.972)">Modify</span><span style="left:561px;transform:scaleX(0.924)">Constraints</span><span style="left:643px;transform:scaleX(0.903)">Tools</span><span style="left:688px;transform:scaleX(0.914)">Solids</span><span style="left:739px;transform:scaleX(0.926)">Window</span><span style="left:801px;transform:scaleX(0.912)">Help</span><svg class="abs" style="left:1100px;top:5px" width="24" height="12" viewBox="0 0 24 12"><rect x="1" y="1" width="19" height="9.300" rx="2.600" fill="none" stroke="rgba(255,255,255,.6)" stroke-width="1"/><rect x="2.300" y="2.300" width="16.400" height="6.700" rx="1.500" fill="#fff"/><path d="M21.200 4v3.400c1-.3 1-3.100 0-3.400z" fill="rgba(255,255,255,.6)"/></svg><svg class="abs" style="left:1138.500px;top:4.500px" width="16" height="12" viewBox="0 0 16 12"><path d="M1 4a10 10 0 0 1 14 0M3.400 6.600a6.600 6.600 0 0 1 9.200 0M5.800 9a3.200 3.200 0 0 1 4.400 0" fill="none" stroke="#fff" stroke-width="1.800" stroke-linecap="round"/><circle cx="8" cy="10.600" r="1.100" fill="#fff"/></svg><svg class="abs" style="left:1170.500px;top:5px" width="13" height="12" viewBox="0 0 13 12"><circle cx="4.800" cy="4.600" r="3.600" fill="none" stroke="#fff" stroke-width="1.500"/><path d="M7.500 7.300l3.500 3.500" stroke="#fff" stroke-width="1.700" stroke-linecap="round"/></svg><svg class="abs" style="left:1199px;top:5px" width="14" height="13" viewBox="0 0 14 13"><rect x=".7" y=".7" width="11.800" height="4.600" rx="2.300" fill="none" stroke="#fff" stroke-width="1.200"/><circle cx="3.200" cy="3" r="1.200" fill="#fff"/><rect x=".2" y="6.800" width="12.800" height="5" rx="2.500" fill="#fff"/><circle cx="10.300" cy="9.300" r="1.300" fill="#2a68b4"/></svg><svg class="abs" style="left:1227.500px;top:4.500px" width="12" height="12" viewBox="0 0 12 12"><defs><radialGradient id="sg" cx=".45" cy=".55" r=".6"><stop offset="0" stop-color="#e86ad8"/><stop offset=".4" stop-color="#6a3ab8"/><stop offset="1" stop-color="#1c2a66"/></radialGradient></defs><circle cx="6" cy="6" r="5.800" fill="url(#sg)"/><path d="M2.500 8.500l3.500-2.500l-1-3.500M9 3l-3 3l2.500 3.500" stroke="#7fe8ff" stroke-width="1" fill="none" opacity=".75"/><path d="M3.500 3.500l2.500 2.500l4 1" stroke="#ff6a8a" stroke-width="1" fill="none" opacity=".8"/></svg><svg class="abs" style="left:1253px;top:2px" width="18" height="18" viewBox="0 0 18 18"><circle cx="9" cy="8.800" r="7.100" fill="none" stroke="#fff" stroke-width="1.200"/><path d="M9 8.800l3.800-2.200M9 8.800l1.600-.7" stroke="#fff" stroke-width="1.100" stroke-linecap="round"/></svg></div></body></html>
